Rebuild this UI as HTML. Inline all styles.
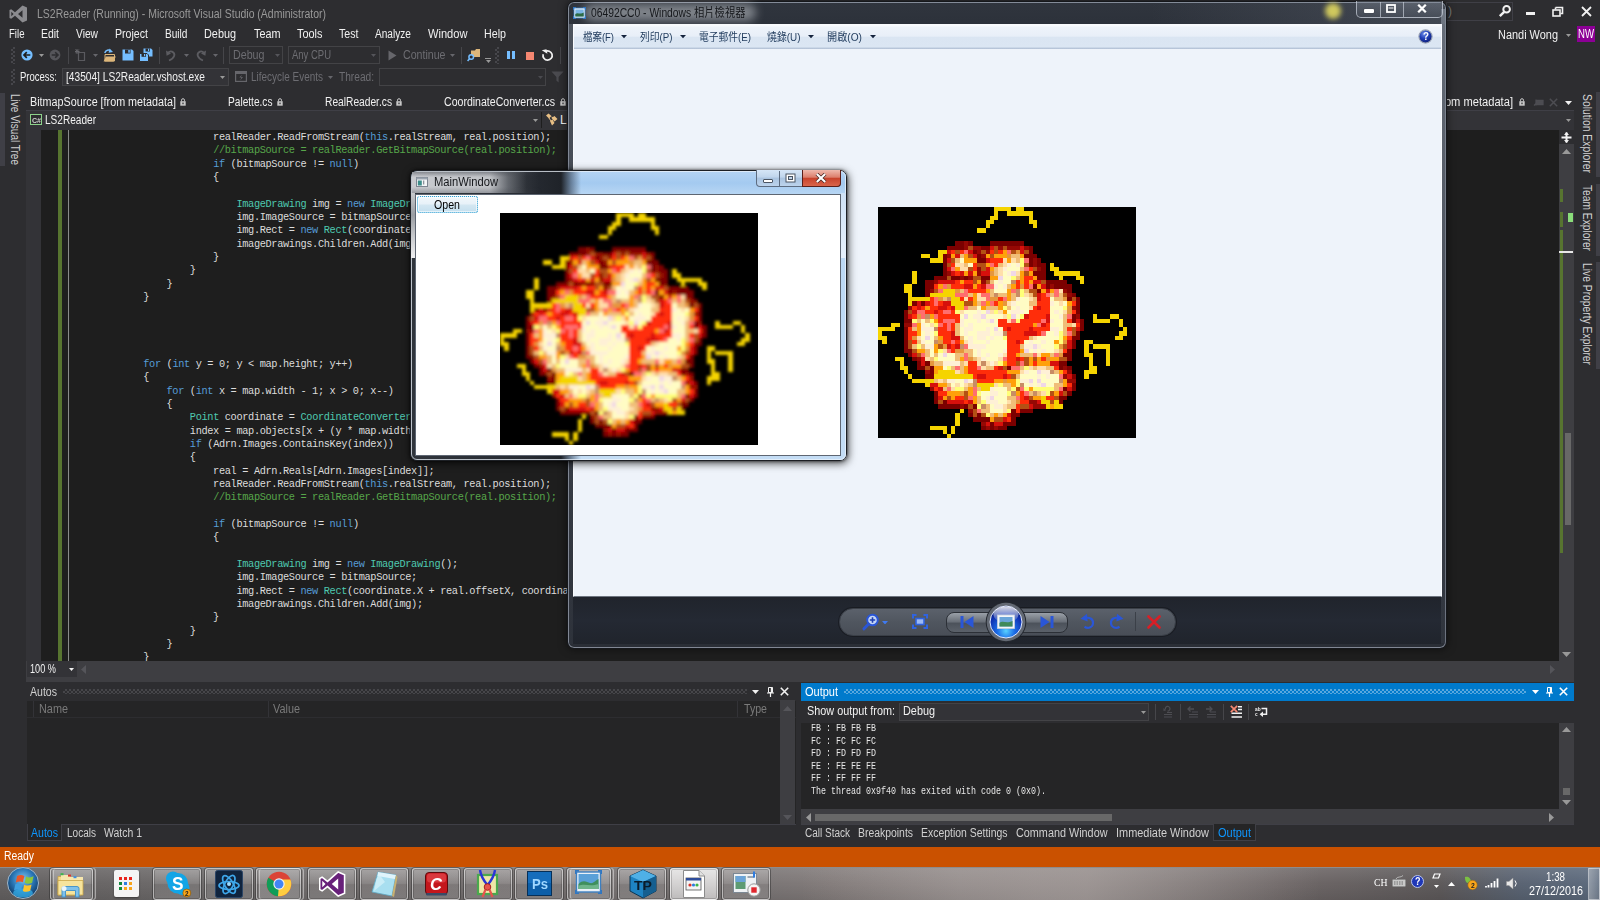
<!DOCTYPE html><html><head><meta charset="utf-8"><title>LS2Reader</title><style>
html,body{margin:0;padding:0;}
body{width:1600px;height:900px;overflow:hidden;position:relative;background:#2d2d30;font-family:"Liberation Sans","Noto Sans CJK TC",sans-serif;}
div,span,svg{position:absolute;box-sizing:border-box;}
.t{white-space:pre;transform-origin:0 50%;}
.code{font-family:"Liberation Mono",monospace;font-size:10.3px;line-height:13.35px;color:#dcdcdc;white-space:pre;left:0;}
.k{color:#569cd6;position:static}.c{color:#57a64a;position:static}.y{color:#4ec9b0;position:static}
</style></head><body><svg style="left:9px;top:5px" width="19" height="18" viewBox="0 0 19 18"><path d="M13.5 0.5 L18 2.5 V15.5 L13.5 17.5 L6 10.8 L2.2 13.8 L0.5 12.9 V5.1 L2.2 4.2 L6 7.2 Z M13.5 5.2 L9 9 L13.5 12.8 Z M2.3 6.8 V11.2 L4.6 9 Z" fill="#8b8b8f" fill-rule="evenodd"/></svg><span class="t" style="left:37px;top:5.8px;line-height:17px;font-size:12px;color:#999999;transform:scaleX(0.8725);">LS2Reader (Running) - Microsoft Visual Studio (Administrator)</span><div style="left:1446px;top:2px;width:67px;height:19px;border:1px solid #3f3f46;"></div><span class="t" style="left:1448px;top:3.3px;line-height:17px;font-size:12px;color:#777;">)</span><svg style="left:1498px;top:4px" width="14" height="14" viewBox="0 0 14 14"><circle cx="8.6" cy="5.2" r="3.3" fill="none" stroke="#f1f1f1" stroke-width="2"/><path d="M6.2 7.8 L1.8 12.2" stroke="#f1f1f1" stroke-width="2.4"/></svg><div style="left:1526px;top:12px;width:9px;height:3px;background:#f1f1f1;"></div><svg style="left:1552px;top:6px" width="12" height="12" viewBox="0 0 12 12"><path d="M3.5 1.5H10.5V7.5H8.5 M3.5 1.5V3.5" fill="none" stroke="#f1f1f1" stroke-width="1.6"/><rect x="1" y="4" width="7" height="6" fill="none" stroke="#f1f1f1" stroke-width="1.6"/></svg><svg style="left:1581px;top:6px" width="11" height="11" viewBox="0 0 11 11"><path d="M1 1L10 10M10 1L1 10" stroke="#f1f1f1" stroke-width="1.8"/></svg><span class="t" style="left:1498px;top:26.8px;line-height:17px;font-size:12px;color:#f1f1f1;transform:scaleX(0.9115);">Nandi Wong</span><svg style="left:1565.5px;top:33.5px" width="5" height="3" viewBox="0 0 5 3"><path d="M0 0H5L2.5 3Z" fill="#999"/></svg><div style="left:1577px;top:26px;width:18px;height:16px;background:#8c0095;"></div><span class="t" style="left:1578px;top:26.3px;line-height:17px;font-size:12px;color:#ffffff;transform:scaleX(0.8000);">NW</span><span class="t" style="left:8.5px;top:25.8px;line-height:17px;font-size:12px;color:#f1f1f1;transform:scaleX(0.8013);">File</span><span class="t" style="left:41px;top:25.8px;line-height:17px;font-size:12px;color:#f1f1f1;transform:scaleX(0.8701);">Edit</span><span class="t" style="left:76px;top:25.8px;line-height:17px;font-size:12px;color:#f1f1f1;transform:scaleX(0.8528);">View</span><span class="t" style="left:115px;top:25.8px;line-height:17px;font-size:12px;color:#f1f1f1;transform:scaleX(0.8833);">Project</span><span class="t" style="left:164.5px;top:25.8px;line-height:17px;font-size:12px;color:#f1f1f1;transform:scaleX(0.8431);">Build</span><span class="t" style="left:204px;top:25.8px;line-height:17px;font-size:12px;color:#f1f1f1;transform:scaleX(0.9046);">Debug</span><span class="t" style="left:253.5px;top:25.8px;line-height:17px;font-size:12px;color:#f1f1f1;transform:scaleX(0.9031);">Team</span><span class="t" style="left:297px;top:25.8px;line-height:17px;font-size:12px;color:#f1f1f1;transform:scaleX(0.9102);">Tools</span><span class="t" style="left:339px;top:25.8px;line-height:17px;font-size:12px;color:#f1f1f1;transform:scaleX(0.8857);">Test</span><span class="t" style="left:375px;top:25.8px;line-height:17px;font-size:12px;color:#f1f1f1;transform:scaleX(0.8430);">Analyze</span><span class="t" style="left:428px;top:25.8px;line-height:17px;font-size:12px;color:#f1f1f1;transform:scaleX(0.9253);">Window</span><span class="t" style="left:484px;top:25.8px;line-height:17px;font-size:12px;color:#f1f1f1;transform:scaleX(0.8911);">Help</span><div style="left:11px;top:47px;width:4px;height:17px;background-image:linear-gradient(45deg,#46464b 25%,transparent 25%,transparent 75%,#46464b 75%),linear-gradient(45deg,#46464b 25%,transparent 25%,transparent 75%,#46464b 75%);background-size:4px 4px;background-position:0 0,2px 2px"></div><svg style="left:21px;top:49px" width="12" height="12" viewBox="0 0 12 12"><circle cx="6" cy="6" r="5.6" fill="#75beff"/><path d="M9.3 6H3.2M5.8 3.2L3 6L5.8 8.8" stroke="#1e1e1e" stroke-width="1.7" fill="none"/></svg><svg style="left:38.5px;top:54.0px" width="5" height="3" viewBox="0 0 5 3"><path d="M0 0H5L2.5 3Z" fill="#999"/></svg><svg style="left:49px;top:49px" width="12" height="12" viewBox="0 0 12 12"><circle cx="6" cy="6" r="5.4" fill="#55555a"/><path d="M2.7 6H8.8M6.2 3.2L9 6L6.2 8.8" stroke="#2d2d30" stroke-width="1.6" fill="none"/></svg><div style="left:68px;top:47px;width:1px;height:17px;background:#46464a;"></div><svg style="left:75px;top:48px" width="12" height="14" viewBox="0 0 12 14"><path d="M3.5 4.5H9.5V12.5H3.5Z" fill="none" stroke="#5a5a5f" stroke-width="1.2"/><path d="M2 1V6M0 3.5H4.5M0.5 1.5L3.8 5.2M3.8 1.5L0.5 5.2" stroke="#66666b" stroke-width="1"/></svg><svg style="left:92.5px;top:54.0px" width="5" height="3" viewBox="0 0 5 3"><path d="M0 0H5L2.5 3Z" fill="#66666b"/></svg><svg style="left:103px;top:47.5px" width="13" height="14" viewBox="0 0 13 14"><path d="M2 6.5H11.5V13H2Z" fill="#2d2d30" stroke="#dcb67a" stroke-width="1"/><path d="M0.6 13.4L3 8.6H12.8L10.6 13.4Z" fill="#dcb67a"/><path d="M1.8 5C2.4 2.2 6 1.2 7.8 3" stroke="#75beff" stroke-width="1.5" fill="none"/><path d="M6.6 0.6L10 4L5.6 4.8Z" fill="#75beff"/></svg><svg style="left:122px;top:49px" width="12" height="12" viewBox="0 0 12 12"><path d="M0.5 0.5H10L11.5 2V11.5H0.5Z" fill="#75beff"/><rect x="3" y="0.5" width="5.5" height="4" fill="#2d2d30"/><rect x="6.3" y="1" width="1.5" height="2.7" fill="#75beff"/></svg><svg style="left:139px;top:48px" width="14" height="14" viewBox="0 0 14 14"><path d="M4.5 0.5H12L13.5 2V8.5H4.5Z" fill="#75beff"/><rect x="6.5" y="0.5" width="4.5" height="3" fill="#2d2d30"/><rect x="9" y="0.8" width="1.2" height="2.2" fill="#75beff"/><path d="M0.5 5.5H8L9.5 7V13.5H0.5Z" fill="#75beff" stroke="#2d2d30" stroke-width="1"/><rect x="2.5" y="5.8" width="4.5" height="3" fill="#2d2d30"/><rect x="5" y="6" width="1.2" height="2.2" fill="#75beff"/></svg><div style="left:159px;top:47px;width:1px;height:17px;background:#46464a;"></div><svg style="left:166px;top:49px" width="11" height="13" viewBox="0 0 11 13"><path d="M3 11.5C9 9 10 4.5 6 2.6C4 1.8 2.5 3 1.6 5" stroke="#5c5c61" stroke-width="1.8" fill="none"/><path d="M0 1.4L0.6 6.8L5 4.4Z" fill="#5c5c61"/></svg><svg style="left:183.5px;top:54.0px" width="5" height="3" viewBox="0 0 5 3"><path d="M0 0H5L2.5 3Z" fill="#66666b"/></svg><svg style="left:195px;top:49px" width="11" height="13" viewBox="0 0 11 13"><path d="M8 11.5C2 9 1 4.5 5 2.6C7 1.8 8.5 3 9.4 5" stroke="#5c5c61" stroke-width="1.8" fill="none"/><path d="M11 1.4L10.4 6.8L6 4.4Z" fill="#5c5c61"/></svg><svg style="left:212.5px;top:54.0px" width="5" height="3" viewBox="0 0 5 3"><path d="M0 0H5L2.5 3Z" fill="#66666b"/></svg><div style="left:223px;top:47px;width:1px;height:17px;background:#46464a;"></div><div style="left:229px;top:46px;width:54px;height:18px;background:#2d2d30;border:1px solid #434346;"></div><span class="t" style="left:233px;top:47.3px;line-height:17px;font-size:12px;color:#6d6d72;transform:scaleX(0.8905);">Debug</span><svg style="left:274.5px;top:54.0px" width="5" height="3" viewBox="0 0 5 3"><path d="M0 0H5L2.5 3Z" fill="#55555a"/></svg><div style="left:288px;top:46px;width:92px;height:18px;background:#2d2d30;border:1px solid #434346;"></div><span class="t" style="left:292px;top:47.3px;line-height:17px;font-size:12px;color:#6d6d72;transform:scaleX(0.7901);">Any CPU</span><svg style="left:371.0px;top:54.0px" width="5" height="3" viewBox="0 0 5 3"><path d="M0 0H5L2.5 3Z" fill="#55555a"/></svg><svg style="left:388px;top:50px" width="9" height="11" viewBox="0 0 9 11"><path d="M0.5 0.5L8.5 5.5L0.5 10.5Z" fill="#66666b"/></svg><span class="t" style="left:403px;top:47.3px;line-height:17px;font-size:12px;color:#6d6d72;transform:scaleX(0.8846);">Continue</span><svg style="left:450.0px;top:54.0px" width="5" height="3" viewBox="0 0 5 3"><path d="M0 0H5L2.5 3Z" fill="#66666b"/></svg><div style="left:461px;top:47px;width:1px;height:17px;background:#46464a;"></div><svg style="left:467px;top:48px" width="14" height="14" viewBox="0 0 14 14"><path d="M4 2.5H8L9 1H13V9H4Z" fill="#dcb67a"/><circle cx="4.2" cy="9" r="2.3" fill="#2d2d30" stroke="#75beff" stroke-width="1.5"/><path d="M2.6 10.8L0.6 13" stroke="#75beff" stroke-width="1.6"/></svg><div style="left:485px;top:58px;width:6px;height:1px;background:#999;"></div><svg style="left:485.5px;top:60.0px" width="5" height="3" viewBox="0 0 5 3"><path d="M0 0H5L2.5 3Z" fill="#999"/></svg><div style="left:495px;top:47px;width:4px;height:17px;background-image:linear-gradient(45deg,#46464b 25%,transparent 25%,transparent 75%,#46464b 75%),linear-gradient(45deg,#46464b 25%,transparent 25%,transparent 75%,#46464b 75%);background-size:4px 4px;background-position:0 0,2px 2px"></div><div style="left:507px;top:50.5px;width:3px;height:8.5px;background:#75beff;"></div><div style="left:511.7px;top:50.5px;width:3px;height:8.5px;background:#75beff;"></div><div style="left:525.5px;top:51.5px;width:8px;height:8px;background:#f48771;"></div><svg style="left:541px;top:49px" width="13" height="13" viewBox="0 0 13 13"><path d="M4.2 2.6A4.6 4.6 0 1 1 2.2 5.2" stroke="#f1f1f1" stroke-width="1.7" fill="none"/><path d="M1.2 0.6H6V5.2Z" fill="#f1f1f1" transform="rotate(-12 4 3)"/></svg><div style="left:560px;top:47px;width:1px;height:17px;background:#46464a;"></div><div style="left:11px;top:69px;width:4px;height:16px;background-image:linear-gradient(45deg,#46464b 25%,transparent 25%,transparent 75%,#46464b 75%),linear-gradient(45deg,#46464b 25%,transparent 25%,transparent 75%,#46464b 75%);background-size:4px 4px;background-position:0 0,2px 2px"></div><span class="t" style="left:19.5px;top:68.8px;line-height:17px;font-size:12px;color:#f1f1f1;transform:scaleX(0.7925);">Process:</span><div style="left:62px;top:68px;width:167px;height:18px;background:#333337;border:1px solid #434346;"></div><span class="t" style="left:65.5px;top:68.8px;line-height:17px;font-size:12px;color:#f1f1f1;transform:scaleX(0.8469);">[43504] LS2Reader.vshost.exe</span><svg style="left:219.5px;top:75.5px" width="5" height="3" viewBox="0 0 5 3"><path d="M0 0H5L2.5 3Z" fill="#999"/></svg><svg style="left:235px;top:71px" width="12" height="11" viewBox="0 0 12 11"><rect x="0.6" y="0.6" width="10.8" height="9.8" fill="none" stroke="#66666b" stroke-width="1.2"/><rect x="0.6" y="0.6" width="10.8" height="2.4" fill="#66666b"/><path d="M6.8 3.8L4.4 6.6H6.4L5.2 9.4L8 6H6Z" fill="#66666b"/></svg><span class="t" style="left:251px;top:68.8px;line-height:17px;font-size:12px;color:#6d6d72;transform:scaleX(0.8303);">Lifecycle Events</span><svg style="left:328.0px;top:75.5px" width="5" height="3" viewBox="0 0 5 3"><path d="M0 0H5L2.5 3Z" fill="#66666b"/></svg><span class="t" style="left:339px;top:68.8px;line-height:17px;font-size:12px;color:#6d6d72;transform:scaleX(0.8462);">Thread:</span><div style="left:379px;top:68px;width:167px;height:18px;background:#2d2d30;border:1px solid #434346;"></div><svg style="left:537.5px;top:75.5px" width="5" height="3" viewBox="0 0 5 3"><path d="M0 0H5L2.5 3Z" fill="#4a4a4f"/></svg><svg style="left:551px;top:71px" width="13" height="12" viewBox="0 0 13 12"><path d="M0.5 0.5H12.5L7.6 6V11.5L5.4 9.6V6Z" fill="#4a4a4f"/></svg><div style="left:0px;top:93px;width:5px;height:73px;background:#3f3f46;"></div><span class="t" style="left:23.0px;top:94px;line-height:17px;font-size:12px;color:#d0d0d0;transform-origin:0 0;transform:rotate(90deg) scaleX(0.8336);">Live Visual Tree</span><div style="left:1596px;top:92px;width:4px;height:85px;background:#3f3f46;"></div><span class="t" style="left:1595.0px;top:94px;line-height:17px;font-size:12px;color:#d0d0d0;transform-origin:0 0;transform:rotate(90deg) scaleX(0.8644);">Solution Explorer</span><div style="left:1596px;top:184px;width:4px;height:72px;background:#3f3f46;"></div><span class="t" style="left:1595.0px;top:185px;line-height:17px;font-size:12px;color:#d0d0d0;transform-origin:0 0;transform:rotate(90deg) scaleX(0.8530);">Team Explorer</span><div style="left:1596px;top:262px;width:4px;height:107px;background:#3f3f46;"></div><span class="t" style="left:1595.0px;top:263px;line-height:17px;font-size:12px;color:#d0d0d0;transform-origin:0 0;transform:rotate(90deg) scaleX(0.8592);">Live Property Explorer</span><span class="t" style="left:29.5px;top:94.3px;line-height:17px;font-size:12px;color:#f1f1f1;transform:scaleX(0.8971);">BitmapSource [from metadata]</span><svg style="left:180px;top:98px" width="6" height="8" viewBox="0 0 6 8"><rect x="0.3" y="3.2" width="5.4" height="4.5" fill="#c8c8c8"/><path d="M1.5 3.4V2.2A1.5 1.5 0 0 1 4.5 2.2V3.4" stroke="#c8c8c8" stroke-width="1" fill="none"/><rect x="2.4" y="4.6" width="1.2" height="1.6" fill="#2d2d30"/></svg><span class="t" style="left:227.5px;top:94.3px;line-height:17px;font-size:12px;color:#f1f1f1;transform:scaleX(0.8444);">Palette.cs</span><svg style="left:277px;top:98px" width="6" height="8" viewBox="0 0 6 8"><rect x="0.3" y="3.2" width="5.4" height="4.5" fill="#c8c8c8"/><path d="M1.5 3.4V2.2A1.5 1.5 0 0 1 4.5 2.2V3.4" stroke="#c8c8c8" stroke-width="1" fill="none"/><rect x="2.4" y="4.6" width="1.2" height="1.6" fill="#2d2d30"/></svg><span class="t" style="left:324.5px;top:94.3px;line-height:17px;font-size:12px;color:#f1f1f1;transform:scaleX(0.8511);">RealReader.cs</span><svg style="left:396px;top:98px" width="6" height="8" viewBox="0 0 6 8"><rect x="0.3" y="3.2" width="5.4" height="4.5" fill="#c8c8c8"/><path d="M1.5 3.4V2.2A1.5 1.5 0 0 1 4.5 2.2V3.4" stroke="#c8c8c8" stroke-width="1" fill="none"/><rect x="2.4" y="4.6" width="1.2" height="1.6" fill="#2d2d30"/></svg><span class="t" style="left:443.5px;top:94.3px;line-height:17px;font-size:12px;color:#f1f1f1;transform:scaleX(0.8804);">CoordinateConverter.cs</span><svg style="left:559.5px;top:98px" width="6" height="8" viewBox="0 0 6 8"><rect x="0.3" y="3.2" width="5.4" height="4.5" fill="#c8c8c8"/><path d="M1.5 3.4V2.2A1.5 1.5 0 0 1 4.5 2.2V3.4" stroke="#c8c8c8" stroke-width="1" fill="none"/><rect x="2.4" y="4.6" width="1.2" height="1.6" fill="#2d2d30"/></svg><span class="t" style="left:1435px;top:94.3px;line-height:17px;font-size:12px;color:#f1f1f1;transform:scaleX(0.9281);">[from metadata]</span><svg style="left:1519px;top:98px" width="6" height="8" viewBox="0 0 6 8"><rect x="0.3" y="3.2" width="5.4" height="4.5" fill="#c8c8c8"/><path d="M1.5 3.4V2.2A1.5 1.5 0 0 1 4.5 2.2V3.4" stroke="#c8c8c8" stroke-width="1" fill="none"/><rect x="2.4" y="4.6" width="1.2" height="1.6" fill="#2d2d30"/></svg><svg style="left:1533px;top:97px" width="11" height="10" viewBox="0 0 11 10"><path d="M1 8.5L4 5.5M3 2.5V8.5M3.5 3.5H10V7.5H3.5Z" stroke="#4d4d52" stroke-width="1.3" fill="#4d4d52"/></svg><svg style="left:1549px;top:98px" width="9" height="9" viewBox="0 0 9 9"><path d="M0.8 0.8L8.2 8.2M8.2 0.8L0.8 8.2" stroke="#4d4d52" stroke-width="1.5"/></svg><svg style="left:1565.0px;top:101.0px" width="7" height="4" viewBox="0 0 7 4"><path d="M0 0H7L3.5 4Z" fill="#f1f1f1"/></svg><div style="left:26px;top:110px;width:1548px;height:20px;background:#333337;border-top:1px solid #3f3f46;"></div><div style="left:540.5px;top:112px;width:1px;height:16px;background:#1e1e1e;"></div><svg style="left:30px;top:114px" width="12" height="11" viewBox="0 0 12 11"><rect x="0.5" y="0.5" width="11" height="10" fill="#2d2d30" stroke="#8dd28a" stroke-width="1"/></svg><span class="t" style="left:31.5px;top:114.6px;line-height:11px;font-size:8px;color:#d0d0d0;transform:scaleX(0.8794);font-weight:bold;">C#</span><span class="t" style="left:44.5px;top:111.8px;line-height:17px;font-size:12px;color:#f1f1f1;transform:scaleX(0.8399);">LS2Reader</span><svg style="left:532.5px;top:119.0px" width="5" height="3" viewBox="0 0 5 3"><path d="M0 0H5L2.5 3Z" fill="#999"/></svg><svg style="left:545px;top:113px" width="13" height="13" viewBox="0 0 13 13"><path d="M1 2.5L3.5 0.5L6.5 3L4 5.5ZM6.5 5L9.5 3L12.5 6L9.5 8.5ZM5 8L7.5 6.5L9.5 10L7 12.5Z" fill="#e8bf84"/><path d="M4 5L6 8M6.5 4L9 5" stroke="#e8bf84" stroke-width="1"/></svg><span class="t" style="left:560px;top:111.8px;line-height:17px;font-size:12px;color:#f1f1f1;">LS2Reader.MapReader</span><svg style="left:1565.5px;top:119.0px" width="5" height="3" viewBox="0 0 5 3"><path d="M0 0H5L2.5 3Z" fill="#999"/></svg><div style="left:26px;top:130px;width:1533px;height:531px;background:#1e1e1e;"></div><div style="left:26px;top:130px;width:15px;height:531px;background:#333337;"></div><div style="left:58px;top:130px;width:4px;height:531px;background:#577430;"></div><div style="left:68px;top:130px;width:1px;height:531px;background:#8a8a8a;"></div><div style="left:26px;top:129.3px;width:1533px;height:531.7px;overflow:hidden"><div class="code" style="left:47.4px;top:1.7px;letter-spacing:-0.357px">                        realReader.ReadFromStream(<span class="k">this</span>.realStream, real.position);
                        <span class="c">//bitmapSource = realReader.GetBitmapSource(real.position);</span>
                        <span class="k">if</span> (bitmapSource != <span class="k">null</span>)
                        {

                            <span class="y">ImageDrawing</span> img = <span class="k">new</span> <span class="y">ImageDrawing</span>();
                            img.ImageSource = bitmapSource;
                            img.Rect = <span class="k">new</span> <span class="y">Rect</span>(coordinate.X + real.offsetX, coordinate.Y + real.offsetY, real.width, real.height);
                            imageDrawings.Children.Add(img);
                        }
                    }
                }
            }




            <span class="k">for</span> (<span class="k">int</span> y = 0; y &lt; map.height; y++)
            {
                <span class="k">for</span> (<span class="k">int</span> x = map.width - 1; x &gt; 0; x--)
                {
                    <span class="y">Point</span> coordinate = <span class="y">CoordinateConverter</span>.Convert(x, y, map.width, map.height);
                    index = map.objects[x + (y * map.width)];
                    <span class="k">if</span> (Adrn.Images.ContainsKey(index))
                    {
                        real = Adrn.Reals[Adrn.Images[index]];
                        realReader.ReadFromStream(<span class="k">this</span>.realStream, real.position);
                        <span class="c">//bitmapSource = realReader.GetBitmapSource(real.position);</span>

                        <span class="k">if</span> (bitmapSource != <span class="k">null</span>)
                        {

                            <span class="y">ImageDrawing</span> img = <span class="k">new</span> <span class="y">ImageDrawing</span>();
                            img.ImageSource = bitmapSource;
                            img.Rect = <span class="k">new</span> <span class="y">Rect</span>(coordinate.X + real.offsetX, coordinate.Y + real.offsetY, real.width, real.height);
                            imageDrawings.Children.Add(img);
                        }
                    }
                }
            }</div></div><div style="left:1559px;top:130px;width:15px;height:531px;background:#3e3e42;"></div><div style="left:1559px;top:130px;width:15px;height:14px;background:#2d2d30;"></div><svg style="left:1561px;top:132px" width="11" height="11" viewBox="0 0 11 11"><path d="M0.5 5.5H10.5M5.5 0.5V10.5" stroke="#f1f1f1" stroke-width="2"/><path d="M5.5 0L8 3H3ZM5.5 11L8 8H3Z" fill="#f1f1f1"/></svg><svg style="left:1562px;top:149px" width="9" height="5" viewBox="0 0 9 5"><path d="M0 5L4.5 0L9 5Z" fill="#999"/></svg><div style="left:1560px;top:189px;width:3px;height:13px;background:#577430;"></div><div style="left:1560px;top:212px;width:3px;height:15px;background:#577430;"></div><div style="left:1560px;top:230px;width:3px;height:323px;background:#577430;"></div><div style="left:1568px;top:213px;width:5px;height:9px;background:#8ade7a;"></div><div style="left:1559px;top:251px;width:14px;height:1.5px;background:#e8e8e8;"></div><div style="left:1564.5px;top:433px;width:6px;height:92px;background:#686868;"></div><svg style="left:1562px;top:652px" width="9" height="5" viewBox="0 0 9 5"><path d="M0 0L4.5 5L9 0Z" fill="#999"/></svg><div style="left:26px;top:661px;width:1548px;height:21px;background:#3e3e42;"></div><div style="left:27px;top:661px;width:50px;height:16px;background:#333337;"></div><span class="t" style="left:29.5px;top:661.3px;line-height:17px;font-size:12px;color:#f1f1f1;transform:scaleX(0.7640);">100 %</span><svg style="left:69.0px;top:668.0px" width="5" height="3" viewBox="0 0 5 3"><path d="M0 0H5L2.5 3Z" fill="#f1f1f1"/></svg><svg style="left:81px;top:665px" width="5" height="9" viewBox="0 0 5 9"><path d="M5 0L0 4.5L5 9Z" fill="#55555a"/></svg><svg style="left:1550px;top:665px" width="5" height="9" viewBox="0 0 5 9"><path d="M0 0L5 4.5L0 9Z" fill="#55555a"/></svg><div style="left:27px;top:683px;width:769px;height:142px;background:#252526;"></div><div style="left:27px;top:683px;width:769px;height:17px;background:#2d2d30;"></div><span class="t" style="left:30px;top:683.8px;line-height:17px;font-size:12px;color:#d0d0d0;transform:scaleX(0.8798);">Autos</span><div style="left:63px;top:689px;width:684px;height:5px;background-image:linear-gradient(45deg,#46464a 25%,transparent 25%,transparent 75%,#46464a 75%),linear-gradient(45deg,#46464a 25%,transparent 25%,transparent 75%,#46464a 75%);background-size:4px 4px;background-position:0 0,2px 2px"></div><svg style="left:752.0px;top:690.0px" width="7" height="4" viewBox="0 0 7 4"><path d="M0 0H7L3.5 4Z" fill="#f1f1f1"/></svg><svg style="left:767px;top:687px" width="7" height="10" viewBox="0 0 7 10"><path d="M1.5 0.5H5.5V5.5H1.5Z M4.3 0.5V5.5" fill="none" stroke="#f1f1f1" stroke-width="1"/><path d="M0 6H7M3.5 6V10" stroke="#f1f1f1" stroke-width="1.2"/><rect x="4" y="0.5" width="1.5" height="5" fill="#f1f1f1"/></svg><svg style="left:780px;top:687px" width="9" height="9" viewBox="0 0 9 9"><path d="M0.8 0.8L8.2 8.2M8.2 0.8L0.8 8.2" stroke="#f1f1f1" stroke-width="1.6"/></svg><div style="left:27px;top:700px;width:769px;height:18px;background:#252526;border-top:1px solid #2d2d30;border-bottom:1px solid #2d2d30;"></div><div style="left:33px;top:701px;width:1px;height:16px;background:#333337;"></div><div style="left:268px;top:701px;width:1px;height:16px;background:#333337;"></div><div style="left:737px;top:701px;width:1px;height:16px;background:#333337;"></div><span class="t" style="left:38.5px;top:701.3px;line-height:17px;font-size:12px;color:#7a7a7a;transform:scaleX(0.9058);">Name</span><span class="t" style="left:273px;top:701.3px;line-height:17px;font-size:12px;color:#7a7a7a;transform:scaleX(0.9057);">Value</span><span class="t" style="left:743.5px;top:701.3px;line-height:17px;font-size:12px;color:#7a7a7a;transform:scaleX(0.8841);">Type</span><div style="left:780px;top:700px;width:15px;height:124px;background:#3e3e42;"></div><svg style="left:783px;top:706px" width="9" height="5" viewBox="0 0 9 5"><path d="M0 5L4.5 0L9 5Z" fill="#55555a"/></svg><svg style="left:783px;top:815px" width="9" height="5" viewBox="0 0 9 5"><path d="M0 0L4.5 5L9 0Z" fill="#55555a"/></svg><div style="left:27px;top:824px;width:769px;height:1px;background:#3f3f46;"></div><div style="left:27px;top:824px;width:35px;height:17px;background:#252526;border:1px solid #3f3f46;border-top:none;"></div><span class="t" style="left:30.5px;top:824.8px;line-height:17px;font-size:12px;color:#0e97ff;transform:scaleX(0.8798);">Autos</span><span class="t" style="left:66.5px;top:824.8px;line-height:17px;font-size:12px;color:#d0d0d0;transform:scaleX(0.8360);">Locals</span><span class="t" style="left:104px;top:824.8px;line-height:17px;font-size:12px;color:#d0d0d0;transform:scaleX(0.8720);">Watch 1</span><div style="left:801px;top:683px;width:773px;height:142px;background:#252526;"></div><div style="left:801px;top:683px;width:773px;height:18px;background:#007acc;"></div><span class="t" style="left:804.5px;top:683.8px;line-height:17px;font-size:12px;color:#ffffff;transform:scaleX(0.9159);">Output</span><div style="left:844px;top:689px;width:682px;height:5px;background-image:linear-gradient(45deg,#59a8de 25%,transparent 25%,transparent 75%,#59a8de 75%),linear-gradient(45deg,#59a8de 25%,transparent 25%,transparent 75%,#59a8de 75%);background-size:4px 4px;background-position:0 0,2px 2px"></div><svg style="left:1531.5px;top:690.0px" width="7" height="4" viewBox="0 0 7 4"><path d="M0 0H7L3.5 4Z" fill="#ffffff"/></svg><svg style="left:1546px;top:687px" width="7" height="10" viewBox="0 0 7 10"><path d="M1.5 0.5H5.5V5.5H1.5Z M4.3 0.5V5.5" fill="none" stroke="#ffffff" stroke-width="1"/><path d="M0 6H7M3.5 6V10" stroke="#ffffff" stroke-width="1.2"/><rect x="4" y="0.5" width="1.5" height="5" fill="#ffffff"/></svg><svg style="left:1559px;top:687px" width="9" height="9" viewBox="0 0 9 9"><path d="M0.8 0.8L8.2 8.2M8.2 0.8L0.8 8.2" stroke="#ffffff" stroke-width="1.6"/></svg><div style="left:801px;top:701px;width:773px;height:22px;background:#2d2d30;"></div><span class="t" style="left:806.5px;top:703.3px;line-height:17px;font-size:12px;color:#f1f1f1;transform:scaleX(0.9036);">Show output from:</span><div style="left:899px;top:703px;width:250px;height:18px;background:#333337;border:1px solid #434346;"></div><span class="t" style="left:903px;top:703.3px;line-height:17px;font-size:12px;color:#f1f1f1;transform:scaleX(0.9046);">Debug</span><svg style="left:1140.5px;top:710.5px" width="5" height="3" viewBox="0 0 5 3"><path d="M0 0H5L2.5 3Z" fill="#999"/></svg><div style="left:1155px;top:704px;width:1px;height:16px;background:#46464a;"></div><svg style="left:1161px;top:705px" width="13" height="13" viewBox="0 0 13 13"><path d="M4.5 4.5A2.3 2.3 0 1 1 6.5 6" stroke="#4d4d52" stroke-width="1.2" fill="none"/><path d="M2.5 3L5 5.5L2.5 6Z" fill="#4d4d52"/><path d="M6 7.5H11M3 9.5H11M3 12H11" stroke="#4d4d52" stroke-width="1.2"/></svg><svg style="left:1186px;top:705px" width="13" height="13" viewBox="0 0 13 13"><path d="M2 4H8M4.5 1.5L2 4L4.5 6.5" stroke="#4d4d52" stroke-width="1.3" fill="none"/><path d="M6 7H12M3 9.5H12M3 12H12" stroke="#4d4d52" stroke-width="1.2"/></svg><svg style="left:1204px;top:705px" width="13" height="13" viewBox="0 0 13 13"><path d="M2 4H8M5.5 1.5L8 4L5.5 6.5" stroke="#4d4d52" stroke-width="1.3" fill="none"/><path d="M6 7H12M3 9.5H12M3 12H12" stroke="#4d4d52" stroke-width="1.2"/></svg><div style="left:1180px;top:704px;width:1px;height:16px;background:#46464a;"></div><div style="left:1223px;top:704px;width:1px;height:16px;background:#46464a;"></div><svg style="left:1230px;top:705px" width="13" height="14" viewBox="0 0 13 14"><path d="M8 1.8H12M8 4.6H12M1.5 8.3H12M1.5 12H12" stroke="#f1f1f1" stroke-width="1.5"/><path d="M0.8 0.8L7.2 7.2M7.2 0.8L0.8 7.2" stroke="#f48771" stroke-width="1.7"/></svg><div style="left:1248px;top:704px;width:1px;height:16px;background:#46464a;"></div><svg style="left:1254px;top:705px" width="14" height="13" viewBox="0 0 14 13"><path d="M7.5 3.6H12.5V9.3H8" stroke="#f1f1f1" stroke-width="1.5" fill="none"/><path d="M9 6.6L5.6 9.3L9 12Z" fill="#f1f1f1"/></svg><span class="t" style="left:1255px;top:704.7px;line-height:8px;font-size:5.5px;color:#f1f1f1;transform:scaleX(0.8720);font-weight:bold;">ab</span><span class="t" style="left:1255px;top:710.2px;line-height:8px;font-size:5.5px;color:#f1f1f1;transform:scaleX(0.8490);font-weight:bold;">c</span><div style="left:801px;top:723px;width:758px;height:86px;background:#252526;"></div><span class="t" style="left:810.5px;top:721.2px;line-height:15px;font-size:10.5px;color:#e6e6e6;transform:scaleX(0.7934);font-family:'Liberation Mono',monospace;">FB : FB FB FB</span><span class="t" style="left:810.5px;top:733.7px;line-height:15px;font-size:10.5px;color:#e6e6e6;transform:scaleX(0.7934);font-family:'Liberation Mono',monospace;">FC : FC FC FC</span><span class="t" style="left:810.5px;top:746.2px;line-height:15px;font-size:10.5px;color:#e6e6e6;transform:scaleX(0.7934);font-family:'Liberation Mono',monospace;">FD : FD FD FD</span><span class="t" style="left:810.5px;top:758.7px;line-height:15px;font-size:10.5px;color:#e6e6e6;transform:scaleX(0.7934);font-family:'Liberation Mono',monospace;">FE : FE FE FE</span><span class="t" style="left:810.5px;top:771.2px;line-height:15px;font-size:10.5px;color:#e6e6e6;transform:scaleX(0.7934);font-family:'Liberation Mono',monospace;">FF : FF FF FF</span><span class="t" style="left:810.5px;top:783.7px;line-height:15px;font-size:10.5px;color:#e6e6e6;transform:scaleX(0.7935);font-family:'Liberation Mono',monospace;">The thread 0x9f40 has exited with code 0 (0x0).</span><div style="left:1559px;top:723px;width:15px;height:86px;background:#3e3e42;"></div><svg style="left:1562px;top:727px" width="9" height="5" viewBox="0 0 9 5"><path d="M0 5L4.5 0L9 5Z" fill="#999"/></svg><div style="left:1562.5px;top:788px;width:7px;height:7px;background:#686868;"></div><svg style="left:1562px;top:800px" width="9" height="5" viewBox="0 0 9 5"><path d="M0 0L4.5 5L9 0Z" fill="#999"/></svg><div style="left:801px;top:809px;width:773px;height:16px;background:#3e3e42;"></div><svg style="left:806px;top:812.5px" width="5" height="9" viewBox="0 0 5 9"><path d="M5 0L0 4.5L5 9Z" fill="#999"/></svg><div style="left:815px;top:813.5px;width:297px;height:7px;background:#686868;"></div><svg style="left:1549px;top:812.5px" width="5" height="9" viewBox="0 0 5 9"><path d="M0 0L5 4.5L0 9Z" fill="#999"/></svg><div style="left:801px;top:824px;width:773px;height:1px;background:#3f3f46;"></div><div style="left:1212.5px;top:824px;width:43px;height:17px;background:#252526;border:1px solid #3f3f46;border-top:none;"></div><span class="t" style="left:804.5px;top:824.8px;line-height:17px;font-size:12px;color:#d0d0d0;transform:scaleX(0.8329);">Call Stack</span><span class="t" style="left:857.5px;top:824.8px;line-height:17px;font-size:12px;color:#d0d0d0;transform:scaleX(0.8679);">Breakpoints</span><span class="t" style="left:921px;top:824.8px;line-height:17px;font-size:12px;color:#d0d0d0;transform:scaleX(0.8702);">Exception Settings</span><span class="t" style="left:1016px;top:824.8px;line-height:17px;font-size:12px;color:#d0d0d0;transform:scaleX(0.9026);">Command Window</span><span class="t" style="left:1115.5px;top:824.8px;line-height:17px;font-size:12px;color:#d0d0d0;transform:scaleX(0.9113);">Immediate Window</span><span class="t" style="left:1217.5px;top:824.8px;line-height:17px;font-size:12px;color:#0e97ff;transform:scaleX(0.9159);">Output</span><div style="left:0px;top:847px;width:1600px;height:20px;background:#ca5100;"></div><span class="t" style="left:3.5px;top:848.3px;line-height:17px;font-size:12px;color:#ffffff;transform:scaleX(0.8649);">Ready</span><div style="left:0;top:867px;width:1600px;height:33px;background:linear-gradient(90deg,#646161 0%,#6e6b6b 12%,#757070 30%,#7b7676 48%,#827b7a 52%,#8d8685 60%,#857e7d 68%,#6f6868 80%,#5e5a5b 90%,#5a6473 95%,#5d6b7e 100%);border-top:1px solid #8f8b8b"></div><div style="left:0;top:868px;width:1600px;height:32px;background:linear-gradient(180deg,rgba(255,255,255,.10),rgba(255,255,255,0) 50%,rgba(0,0,0,.10))"></div><div style="left:800px;top:868px;width:520px;height:32px;background:linear-gradient(90deg,rgba(170,162,160,0) 0,rgba(176,168,166,.5) 45%,rgba(176,168,166,.55) 55%,rgba(150,140,138,0) 100%)"></div><svg style="left:5.5px;top:866px" width="34" height="34" viewBox="0 0 34 34"><defs><radialGradient id="orb" cx="50%" cy="38%" r="60%"><stop offset="0" stop-color="#7cc4ee"/><stop offset=".55" stop-color="#2b78b8"/><stop offset="1" stop-color="#0d3966"/></radialGradient></defs><circle cx="17" cy="17" r="15.5" fill="url(#orb)" stroke="#9fb6c9" stroke-width="1"/><ellipse cx="17" cy="27" rx="10" ry="4.5" fill="#36b5f0" opacity=".7"/><g transform="translate(18.2 17.2) scale(1.25) translate(-16.2 -17.2)"><path d="M10.5 11.5C12.5 10.3 14.5 10.4 16.3 11.4L15.2 16.4C13.4 15.5 11.5 15.5 9.5 16.6Z" fill="#e8572a"/><path d="M17.7 11.9C19.6 12.9 21.6 12.9 23.7 11.7L22.5 16.8C20.5 17.9 18.5 17.9 16.6 16.9Z" fill="#8cc63e"/><path d="M9.1 18.1C11.1 17 13 17 14.9 17.9L13.8 22.8C11.9 21.9 10 21.9 8 23Z" fill="#3e9fe0"/><path d="M16.2 18.4C18.1 19.4 20.1 19.4 22.1 18.3L21 23.3C19 24.4 17 24.4 15.1 23.4Z" fill="#fbc32d"/></g></svg><div style="left:52.5px;top:868px;width:43px;height:32px;border:1px solid rgba(255,255,255,.38);border-radius:3px;background:rgba(255,255,255,.10)"></div><div style="left:49.5px;top:868px;width:43px;height:32px;border:1px solid rgba(255,255,255,.45);border-radius:3px;background:linear-gradient(180deg,rgba(255,255,255,.30) 0%,rgba(255,255,255,.16) 48%,rgba(255,255,255,.07) 52%,rgba(255,255,255,.14) 100%);box-shadow:inset 0 0 0 1px rgba(0,0,0,.18), 0 0 0 1px rgba(40,40,40,.45)"></div><div style="left:153px;top:868px;width:48px;height:32px;border:1px solid rgba(255,255,255,.45);border-radius:3px;background:linear-gradient(180deg,rgba(255,255,255,.30) 0%,rgba(255,255,255,.16) 48%,rgba(255,255,255,.07) 52%,rgba(255,255,255,.14) 100%);box-shadow:inset 0 0 0 1px rgba(0,0,0,.18), 0 0 0 1px rgba(40,40,40,.45)"></div><div style="left:204.5px;top:868px;width:48px;height:32px;border:1px solid rgba(255,255,255,.45);border-radius:3px;background:linear-gradient(180deg,rgba(255,255,255,.30) 0%,rgba(255,255,255,.16) 48%,rgba(255,255,255,.07) 52%,rgba(255,255,255,.14) 100%);box-shadow:inset 0 0 0 1px rgba(0,0,0,.18), 0 0 0 1px rgba(40,40,40,.45)"></div><div style="left:259px;top:868px;width:45px;height:32px;border:1px solid rgba(255,255,255,.38);border-radius:3px;background:rgba(255,255,255,.10)"></div><div style="left:256px;top:868px;width:45px;height:32px;border:1px solid rgba(255,255,255,.45);border-radius:3px;background:linear-gradient(180deg,rgba(255,255,255,.30) 0%,rgba(255,255,255,.16) 48%,rgba(255,255,255,.07) 52%,rgba(255,255,255,.14) 100%);box-shadow:inset 0 0 0 1px rgba(0,0,0,.18), 0 0 0 1px rgba(40,40,40,.45)"></div><div style="left:308px;top:868px;width:48px;height:32px;border:1px solid rgba(255,255,255,.45);border-radius:3px;background:linear-gradient(180deg,rgba(255,255,255,.30) 0%,rgba(255,255,255,.16) 48%,rgba(255,255,255,.07) 52%,rgba(255,255,255,.14) 100%);box-shadow:inset 0 0 0 1px rgba(0,0,0,.18), 0 0 0 1px rgba(40,40,40,.45)"></div><div style="left:360px;top:868px;width:48px;height:32px;border:1px solid rgba(255,255,255,.45);border-radius:3px;background:linear-gradient(180deg,rgba(255,255,255,.30) 0%,rgba(255,255,255,.16) 48%,rgba(255,255,255,.07) 52%,rgba(255,255,255,.14) 100%);box-shadow:inset 0 0 0 1px rgba(0,0,0,.18), 0 0 0 1px rgba(40,40,40,.45)"></div><div style="left:412px;top:868px;width:48px;height:32px;border:1px solid rgba(255,255,255,.45);border-radius:3px;background:linear-gradient(180deg,rgba(255,255,255,.30) 0%,rgba(255,255,255,.16) 48%,rgba(255,255,255,.07) 52%,rgba(255,255,255,.14) 100%);box-shadow:inset 0 0 0 1px rgba(0,0,0,.18), 0 0 0 1px rgba(40,40,40,.45)"></div><div style="left:463.5px;top:868px;width:48px;height:32px;border:1px solid rgba(255,255,255,.45);border-radius:3px;background:linear-gradient(180deg,rgba(255,255,255,.30) 0%,rgba(255,255,255,.16) 48%,rgba(255,255,255,.07) 52%,rgba(255,255,255,.14) 100%);box-shadow:inset 0 0 0 1px rgba(0,0,0,.18), 0 0 0 1px rgba(40,40,40,.45)"></div><div style="left:515px;top:868px;width:48px;height:32px;border:1px solid rgba(255,255,255,.45);border-radius:3px;background:linear-gradient(180deg,rgba(255,255,255,.30) 0%,rgba(255,255,255,.16) 48%,rgba(255,255,255,.07) 52%,rgba(255,255,255,.14) 100%);box-shadow:inset 0 0 0 1px rgba(0,0,0,.18), 0 0 0 1px rgba(40,40,40,.45)"></div><div style="left:569.5px;top:868px;width:44px;height:32px;border:1px solid rgba(255,255,255,.38);border-radius:3px;background:rgba(255,255,255,.10)"></div><div style="left:566.5px;top:868px;width:44px;height:32px;border:1px solid rgba(255,255,255,.45);border-radius:3px;background:linear-gradient(180deg,rgba(255,255,255,.30) 0%,rgba(255,255,255,.16) 48%,rgba(255,255,255,.07) 52%,rgba(255,255,255,.14) 100%);box-shadow:inset 0 0 0 1px rgba(0,0,0,.18), 0 0 0 1px rgba(40,40,40,.45)"></div><div style="left:618px;top:868px;width:48px;height:32px;border:1px solid rgba(255,255,255,.45);border-radius:3px;background:linear-gradient(180deg,rgba(255,255,255,.30) 0%,rgba(255,255,255,.16) 48%,rgba(255,255,255,.07) 52%,rgba(255,255,255,.14) 100%);box-shadow:inset 0 0 0 1px rgba(0,0,0,.18), 0 0 0 1px rgba(40,40,40,.45)"></div><div style="left:670px;top:868px;width:48px;height:32px;border:1px solid rgba(255,255,255,.45);border-radius:3px;background:linear-gradient(180deg,rgba(255,255,255,.80),rgba(255,255,255,.55));box-shadow:inset 0 0 0 1px rgba(0,0,0,.18), 0 0 0 1px rgba(40,40,40,.45)"></div><div style="left:722px;top:868px;width:48px;height:32px;border:1px solid rgba(255,255,255,.45);border-radius:3px;background:linear-gradient(180deg,rgba(255,255,255,.30) 0%,rgba(255,255,255,.16) 48%,rgba(255,255,255,.07) 52%,rgba(255,255,255,.14) 100%);box-shadow:inset 0 0 0 1px rgba(0,0,0,.18), 0 0 0 1px rgba(40,40,40,.45)"></div><svg style="left:57px;top:871px" width="28" height="28" viewBox="0 0 28 28"><path d="M1 5.5H9L11 7.5H24V24H1Z" fill="#f3d98a" stroke="#c9a648" stroke-width=".8"/><path d="M4 4H12L14 6H26V10H4Z" fill="#f7e7ae"/><rect x="3.5" y="2.2" width="3" height="2" fill="#3db54a"/><rect x="11" y="3.6" width="3" height="2" fill="#d9342b"/><rect x="16.5" y="5.2" width="3" height="2" fill="#3e8ede"/><path d="M1 9.5H26V24H1Z" fill="#f6e39c" stroke="#c9a648" stroke-width=".8"/><path d="M5 26V17.5Q5 15.5 7 15.5H20Q22 15.5 22 17.5V26H18.5V19.5H8.5V26Z" fill="#7fc1ea" stroke="#3d8fc9" stroke-width=".9"/><circle cx="7" cy="17.5" r="2.5" fill="#fff" opacity=".85"/></svg><div style="left:113.5px;top:870px;width:25px;height:27px;background:#f4f4f4;border-radius:2px;box-shadow:0 1px 2px rgba(0,0,0,.4)"></div><div style="left:118.5px;top:876.5px;width:3.4px;height:3px;background:#e8231b;"></div><div style="left:123.7px;top:876.5px;width:3.4px;height:3px;background:#e8231b;"></div><div style="left:128.9px;top:876.5px;width:3.4px;height:3px;background:#e8231b;"></div><div style="left:118.5px;top:881.6px;width:3.4px;height:3px;background:#11893b;"></div><div style="left:123.7px;top:881.6px;width:3.4px;height:3px;background:#2f7de1;"></div><div style="left:128.9px;top:881.6px;width:3.4px;height:3px;background:#f9a51a;"></div><div style="left:118.5px;top:886.7px;width:3.4px;height:3px;background:#11893b;"></div><div style="left:123.7px;top:886.7px;width:3.4px;height:3px;background:#f9a51a;"></div><div style="left:128.9px;top:886.7px;width:3.4px;height:3px;background:#f9a51a;"></div><svg style="left:164px;top:869px" width="30" height="30" viewBox="0 0 30 30"><circle cx="9" cy="9.5" r="7" fill="#12a5e6"/><circle cx="18.5" cy="19" r="7" fill="#12a5e6"/><circle cx="13.8" cy="14.2" r="10.3" fill="#12a5e6"/><circle cx="22.8" cy="24" r="4" fill="#f9a51a" stroke="#7a4b00" stroke-width=".6"/></svg><span class="t" style="left:172px;top:871.8px;line-height:25px;font-size:18px;color:#ffffff;transform:scaleX(0.9571);font-weight:bold;">S</span><span class="t" style="left:185px;top:889.0px;line-height:9px;font-size:6.5px;color:#222;transform:scaleX(0.9931);font-weight:bold;">2</span><svg style="left:215px;top:870px" width="28" height="28" viewBox="0 0 28 28"><rect x="0.5" y="0.5" width="27" height="27" rx="2" fill="#10243e" stroke="#2b4566"/><g fill="none" stroke="#3ea7ea" stroke-width="1.7"><ellipse cx="14" cy="14.5" rx="4.2" ry="10" transform="rotate(28 14 14.5)"/><ellipse cx="14" cy="14.5" rx="4.2" ry="10" transform="rotate(-32 14 14.5)"/><ellipse cx="14" cy="15.5" rx="10" ry="4" /></g><circle cx="14" cy="14" r="2" fill="#9edcff"/></svg><svg style="left:266px;top:871px" width="26" height="26" viewBox="0 0 26 26"><circle cx="13" cy="13" r="12.3" fill="#db4437"/><path d="M13 13L2.4 6.8A12.3 12.3 0 0 0 12 25.2L17.8 15.6Z" fill="#0f9d58"/><path d="M13 13L12 25.3A12.3 12.3 0 0 0 24.4 8.5H13Z" fill="#ffcd40"/><circle cx="13" cy="13" r="5.7" fill="#f1f1f1"/><circle cx="13" cy="13" r="4.5" fill="#4285f4"/></svg><svg style="left:319px;top:871px" width="27" height="26" viewBox="0 0 19 18"><path d="M13.5 0.5 L18 2.5 V15.5 L13.5 17.5 L6 10.8 L2.2 13.8 L0.5 12.9 V5.1 L2.2 4.2 L6 7.2 Z" fill="#68217a" stroke="#ffffff" stroke-width="1.1"/><path d="M13.5 5.2 L9 9 L13.5 12.8 Z M2.3 6.8 V11.2 L4.6 9 Z" fill="#ffffff"/></svg><svg style="left:369px;top:870px" width="30" height="28" viewBox="0 0 30 28"><path d="M9 2L27 5L23 26L3 22Z" fill="#a8dff0" stroke="#5fa8c4" stroke-width=".8"/><path d="M9 2L27 5L26 9L8.5 6Z" fill="#dff4fb"/><path d="M23 26L27 5L28.5 7L25 27Z" fill="#c8b071"/><path d="M10 4L16 12L5 21L7.5 9Z" fill="#d8f2fa" opacity=".7"/></svg><svg style="left:425px;top:872px" width="23" height="24" viewBox="0 0 23 24"><rect x="0.5" y="0.5" width="22" height="22" rx="3.5" fill="#c4161c" stroke="#5d0b0e"/><rect x="2" y="1.5" width="19" height="9" rx="3" fill="#e4484d" opacity=".7"/><rect x="1" y="21" width="21" height="2.5" rx="1.2" fill="#3a4a66"/></svg><span class="t" style="left:430px;top:873.6px;line-height:22px;font-size:16px;color:#ffffff;transform:scaleX(1.0378);font-weight:bold;font-style:italic;">C</span><svg style="left:474px;top:869px" width="28" height="30" viewBox="0 0 28 30"><rect x="4" y="6" width="19" height="19" fill="#efe7a8" stroke="#4aa84d" stroke-width="2.2"/><path d="M6 1C7 8 10 12 13.5 16M21 1C20 8 17 12 13.5 16" stroke="#2a35d8" stroke-width="2.4" fill="none"/><circle cx="13.5" cy="18" r="3.3" fill="#e7544c" stroke="#a3211b"/><path d="M11.5 20.5L8.5 28M15.5 20.5L18.5 28" stroke="#e7544c" stroke-width="2.2"/></svg><svg style="left:527px;top:871px" width="25" height="25" viewBox="0 0 25 25"><rect x="0.5" y="0.5" width="24" height="24" fill="#0c5ea8" stroke="#062f57"/><rect x="1" y="1" width="23" height="11" fill="#1a73c4" opacity=".7"/></svg><span class="t" style="left:531.5px;top:874.0px;line-height:20px;font-size:14px;color:#9fd7ff;transform:scaleX(0.9343);font-weight:bold;">Ps</span><svg style="left:575px;top:870px" width="27" height="26" viewBox="0 0 27 26"><rect x="1.5" y="2" width="24" height="20" fill="#e9f0f7" stroke="#3c7fc0" stroke-width="1.4"/><rect x="3.5" y="4" width="20" height="15" fill="#5aa0d8"/><path d="M3.5 14C8 9 12 12 15 13C18 14 21 10 23.5 9V19H3.5Z" fill="#3f8f5c"/><path d="M3.5 16C9 13 15 17 23.5 14V19H3.5Z" fill="#6fb58a"/><path d="M0 0H4V1.5H1.5V4H0ZM27 0H23V1.5H25.5V4H27ZM0 24H4V22.5H1.5V20H0ZM27 24H23V22.5H25.5V20H27Z" fill="#2f76c2"/></svg><svg style="left:629px;top:869px" width="28" height="30" viewBox="0 0 28 30"><path d="M14 1L27 7V22L14 29L1 22V7Z" fill="#1e83c2" stroke="#0b3553" stroke-width="1"/><path d="M14 1L27 7L14 13L1 7Z" fill="#4fb0e6"/><path d="M14 13V29L27 22V7Z" fill="#155f90"/></svg><span class="t" style="left:634px;top:877.8px;line-height:17px;font-size:12px;color:#0a1c2b;transform:scaleX(1.1731);font-weight:bold;">TP</span><svg style="left:683px;top:870px" width="22" height="28" viewBox="0 0 22 28"><path d="M0.5 0.5H16L21.5 6V27.5H0.5Z" fill="#ffffff" stroke="#8b8b8b"/><path d="M16 0.5V6H21.5" fill="#e2e2e2" stroke="#8b8b8b"/><rect x="3" y="8" width="15" height="12" fill="#f4f4f4" stroke="#555" stroke-width=".8"/><rect x="3" y="8" width="15" height="2.5" fill="#2e4d9a"/><circle cx="7" cy="15" r="1.6" fill="#d9342b"/><circle cx="10.5" cy="15" r="1.6" fill="#2f7de1"/><circle cx="14" cy="15" r="1.6" fill="#3db54a"/></svg><svg style="left:733px;top:871px" width="28" height="26" viewBox="0 0 28 26"><rect x="0.5" y="2.5" width="23" height="19" fill="#eef1f4" stroke="#7c8894"/><rect x="2.5" y="5" width="10" height="13" fill="#5d9b73"/><rect x="2.5" y="5" width="10" height="6" fill="#6aa3d8"/><rect x="14.5" y="5" width="7" height="2" fill="#9aa7b3"/><rect x="20" y="0.5" width="2" height="6" fill="#2f7de1"/><circle cx="21" cy="19" r="6.2" fill="#f4f4f4" stroke="#999"/><rect x="18.3" y="16.3" width="5.4" height="5.4" fill="#e0262d"/></svg><span class="t" style="left:1373.5px;top:874.8px;line-height:15px;font-size:11px;color:#ffffff;transform:scaleX(0.8834);font-family:'Liberation Serif',serif;">CH</span><svg style="left:1392px;top:875px" width="14" height="12" viewBox="0 0 14 12"><rect x="0.5" y="4.5" width="13" height="7" rx="1" fill="#c9c9c9" stroke="#8e8e8e"/><path d="M2 7H12M2 9H12" stroke="#6f6f6f" stroke-width="1" stroke-dasharray="1.5 1"/><path d="M4 4C5 1 9 3 11 0.5" stroke="#b5b5b5" fill="none"/></svg><svg style="left:1411px;top:875px" width="13" height="13" viewBox="0 0 13 13"><circle cx="6.5" cy="6.5" r="6" fill="#1f37b7" stroke="#b9c4ea" stroke-width="1"/></svg><span class="t" style="left:1415px;top:875.2px;line-height:14px;font-size:10px;color:#ffffff;transform:scaleX(0.9003);font-weight:bold;">?</span><svg style="left:1432px;top:873px" width="9" height="7" viewBox="0 0 9 7"><path d="M2.5 1H8L6.5 5H1Z" fill="none" stroke="#fff" stroke-width="1.2"/></svg><svg style="left:1433.5px;top:885.0px" width="5" height="3" viewBox="0 0 5 3"><path d="M0 0H5L2.5 3Z" fill="#ffffff"/></svg><svg style="left:1447.5px;top:882px" width="7" height="4" viewBox="0 0 7 4"><path d="M0 4L3.5 0L7 4Z" fill="#fff"/></svg><svg style="left:1464px;top:876px" width="15" height="15" viewBox="0 0 15 15"><path d="M1 1C4 0 7 2 7 6L3 7C1 5 1 3 1 1Z" fill="#7cc043"/><circle cx="8.5" cy="9" r="4.7" fill="#f9a51a" stroke="#9a6a12" stroke-width=".6"/></svg><span class="t" style="left:1470.7px;top:880.7px;line-height:10px;font-size:7px;color:#222;transform:scaleX(0.9728);font-weight:bold;">2</span><svg style="left:1485px;top:878px" width="14" height="10" viewBox="0 0 14 10"><path d="M1 9.5V8M3.5 9.5V7M6.5 9.5V5M9.5 9.5V3M12.5 9.5V0.5" stroke="#fff" stroke-width="1.8"/></svg><svg style="left:1506px;top:877px" width="13" height="13" viewBox="0 0 13 13"><path d="M0.5 4.5H3L7 1V12L3 8.5H0.5Z" fill="#e8e8e8" stroke="#999" stroke-width=".5"/><path d="M9 3.5Q11.5 6.5 9 9.5" stroke="#fff" fill="none" stroke-width="1"/></svg><span class="t" style="left:1546px;top:868.8px;line-height:17px;font-size:12px;color:#ffffff;transform:scaleX(0.8134);">1:38</span><span class="t" style="left:1529px;top:883.3px;line-height:17px;font-size:12px;color:#ffffff;transform:scaleX(0.8991);">27/12/2016</span><div style="left:1588px;top:868px;width:12px;height:32px;border:1px solid rgba(255,255,255,.45);background:linear-gradient(90deg,rgba(255,255,255,.32),rgba(255,255,255,.12))"></div><div style="left:567px;top:1px;width:880px;height:648px;border-radius:7px;background:linear-gradient(180deg,#30353e 0,#2b3039 30px,#2a2e36 100%);border:1px solid #15171b;box-shadow:inset 0 0 0 1px rgba(200,210,225,.55), 0 0 8px rgba(0,0,0,.55)"></div><div style="left:1150px;top:3px;width:295px;height:21px;background:linear-gradient(90deg,rgba(120,128,142,0),rgba(120,128,142,.28));border-top-right-radius:6px"></div><div style="left:1441px;top:9px;width:5px;height:634px;background:linear-gradient(180deg,rgba(130,138,150,.7),rgba(90,96,108,.5) 60%,rgba(60,66,76,.3))"></div><div style="left:569px;top:24px;width:4px;height:620px;background:linear-gradient(180deg,rgba(120,128,140,.45),rgba(60,66,76,.2))"></div><div style="left:584px;top:4px;width:172px;height:17px;border-radius:9px;background:rgba(225,228,233,.46);filter:blur(5px)"></div><svg style="left:573px;top:7px" width="13" height="12" viewBox="0 0 13 12"><rect x="1" y="1" width="11" height="10" fill="#f3f7fb" stroke="#3c7fc0" stroke-width=".8"/><rect x="2.3" y="2.5" width="8.4" height="7" fill="#7ab4e4"/><path d="M2.3 7C5 5 7 8 10.7 5.5V9.5H2.3Z" fill="#2d6b45"/><path d="M0 0H3V1H1V3H0ZM13 0H10V1H12V3H13ZM0 12H3V11H1V9H0ZM13 12H10V11H12V9H13Z" fill="#2f76c2"/></svg><span class="t" style="left:591px;top:4.8px;line-height:17px;font-size:12px;color:#15171b;transform:scaleX(0.8580);">06492CC0 - Windows 相片檢視器</span><div style="left:1325px;top:3px;width:16px;height:16px;border-radius:8px;background:#e0d860;filter:blur(2.5px);opacity:.9"></div><div style="left:1355.5px;top:1px;width:87px;height:17px;border:1px solid rgba(215,222,232,.65);border-top:none;border-radius:0 0 5px 5px;background:linear-gradient(180deg,rgba(140,148,162,.35),rgba(90,98,112,.25))"></div><div style="left:1379.5px;top:2px;width:1px;height:15px;background:rgba(215,222,232,.6);"></div><div style="left:1403px;top:2px;width:1px;height:15px;background:rgba(215,222,232,.6);"></div><div style="left:1364px;top:9px;width:10px;height:3.5px;background:#ffffff;border-radius:1px;box-shadow:0 0 1px #333"></div><svg style="left:1386px;top:4px" width="10" height="9" viewBox="0 0 10 9"><rect x="1" y="1" width="8" height="7" fill="none" stroke="#fff" stroke-width="1.8"/><rect x="2.5" y="3.2" width="5" height="1.6" fill="#fff" opacity=".6"/></svg><svg style="left:1417px;top:4px" width="10" height="9" viewBox="0 0 10 9"><path d="M1.2 0.8L8.8 8.2M8.8 0.8L1.2 8.2" stroke="#fff" stroke-width="2.3"/></svg><div style="left:572.5px;top:24px;width:869px;height:573px;background:#eef3fa;border:1px solid #f8fafd;border-bottom:1px solid #6d747f;"></div><div style="left:573.5px;top:25px;width:867px;height:24px;background:linear-gradient(180deg,#fbfcfe 0,#eef3fa 10%,#e8eff8 46%,#dae5f2 52%,#dbe6f3 92%,#aebdd2 97%,#c9d6e6 100%)"></div><span class="t" style="left:583px;top:29.8px;line-height:15px;font-size:11px;color:#1e395b;transform:scaleX(0.8600);">檔案(F)</span><span class="t" style="left:640px;top:29.8px;line-height:15px;font-size:11px;color:#1e395b;transform:scaleX(0.8862);">列印(P)</span><span class="t" style="left:698.5px;top:29.8px;line-height:15px;font-size:11px;color:#1e395b;transform:scaleX(0.8863);">電子郵件(E)</span><span class="t" style="left:767px;top:29.8px;line-height:15px;font-size:11px;color:#1e395b;transform:scaleX(0.8986);">燒錄(U)</span><span class="t" style="left:826.5px;top:29.8px;line-height:15px;font-size:11px;color:#1e395b;transform:scaleX(0.9237);">開啟(O)</span><svg style="left:621.0px;top:35.4px" width="6" height="3.2" viewBox="0 0 6 3.2"><path d="M0 0H6L3.0 3.2Z" fill="#14233d"/></svg><svg style="left:679.5px;top:35.4px" width="6" height="3.2" viewBox="0 0 6 3.2"><path d="M0 0H6L3.0 3.2Z" fill="#14233d"/></svg><svg style="left:808.0px;top:35.4px" width="6" height="3.2" viewBox="0 0 6 3.2"><path d="M0 0H6L3.0 3.2Z" fill="#14233d"/></svg><svg style="left:869.5px;top:35.4px" width="6" height="3.2" viewBox="0 0 6 3.2"><path d="M0 0H6L3.0 3.2Z" fill="#14233d"/></svg><svg style="left:1418px;top:28.5px" width="15" height="15" viewBox="0 0 15 15"><defs><radialGradient id="hq" cx="40%" cy="30%" r="70%"><stop offset="0" stop-color="#6f8fe8"/><stop offset=".5" stop-color="#2240b8"/><stop offset="1" stop-color="#0d1f7a"/></radialGradient></defs><circle cx="7.5" cy="7.5" r="6.6" fill="url(#hq)" stroke="#9aa3b5" stroke-width="1.1"/></svg><span class="t" style="left:1422.6px;top:29.3px;line-height:15px;font-size:11px;color:#ffffff;transform:scaleX(0.8910);font-weight:bold;">?</span><div style="left:573px;top:597px;width:868px;height:47px;background:linear-gradient(180deg,#20242c,#242933 50%,#20242c)"></div><div style="left:838.5px;top:608px;width:337px;height:28px;border-radius:14px;background:linear-gradient(180deg,#5b616b,#50565f 50%,#494e57);border:1px solid #3a3f47;box-shadow:0 0 0 1px rgba(20,22,26,.6)"></div><div style="left:946px;top:612px;width:122px;height:20.5px;border-radius:8px;background:linear-gradient(180deg,#9aa0a8 0,#6a7079 45%,#4c525b 55%,#5b616a 100%);border:1px solid #2c3037"></div><svg style="left:862px;top:613px" width="18" height="18" viewBox="0 0 18 18"><circle cx="10.5" cy="7" r="5.3" fill="#c5d6f5" stroke="#2a56d6" stroke-width="2"/><path d="M6.6 11L2 15.8" stroke="#2a56d6" stroke-width="3" stroke-linecap="round"/><path d="M10.5 4.3V9.7M7.8 7H13.2" stroke="#1f3fb0" stroke-width="1.6"/></svg><svg style="left:881.5px;top:620.75px" width="6" height="3.5" viewBox="0 0 6 3.5"><path d="M0 0H6L3.0 3.5Z" fill="#3f7af0"/></svg><svg style="left:912px;top:614px" width="16" height="15" viewBox="0 0 16 15"><path d="M1 4.5V1H4.5M11.5 1H15V4.5M15 10.5V14H11.5M4.5 14H1V10.5" stroke="#2f63e0" stroke-width="2" fill="none"/><rect x="4" y="4.5" width="8" height="6" fill="#9db9f2" stroke="#2f63e0" stroke-width="1.6"/></svg><svg style="left:959.5px;top:615px" width="14" height="14" viewBox="0 0 14 14"><rect x="0.5" y="1" width="3" height="12" fill="#2a56d6"/><path d="M13.5 1V13L4.5 7Z" fill="#2a56d6"/></svg><svg style="left:1040px;top:615px" width="14" height="14" viewBox="0 0 14 14"><rect x="10.5" y="1" width="3" height="12" fill="#2a56d6"/><path d="M0.5 1V13L9.5 7Z" fill="#2a56d6"/></svg><svg style="left:985px;top:601px" width="42" height="42" viewBox="0 0 42 42"><defs><radialGradient id="pb" cx="50%" cy="78%" r="75%"><stop offset="0" stop-color="#58d2ff"/><stop offset=".35" stop-color="#1d6fe8"/><stop offset=".75" stop-color="#0f2fae"/><stop offset="1" stop-color="#0a1c6e"/></radialGradient><linearGradient id="pg" x1="0" y1="0" x2="0" y2="1"><stop offset="0" stop-color="#ffffff" stop-opacity=".85"/><stop offset="1" stop-color="#ffffff" stop-opacity=".05"/></linearGradient></defs><circle cx="21" cy="21" r="20.3" fill="#24282f"/><circle cx="21" cy="21" r="19.3" fill="#626872"/><circle cx="21" cy="21" r="16" fill="url(#pb)" stroke="#dfe9ff" stroke-width="1"/><ellipse cx="21" cy="13.5" rx="12.5" ry="8" fill="url(#pg)"/><rect x="12.5" y="14" width="17" height="13.5" fill="#f2f5f9" stroke="#c8d0da" stroke-width=".8"/><rect x="14.5" y="16" width="13" height="9.5" fill="#6aa5d9"/><path d="M14.5 22C18 19 21 23 27.5 20V25.5H14.5Z" fill="#3f8a5a"/></svg><svg style="left:1080px;top:613px" width="15" height="17" viewBox="0 0 15 17"><path d="M5 5.5C9 3.5 13.5 6 13 10.5C12.5 14.5 8 16 4.5 13.8" stroke="#2a56d6" stroke-width="2.2" fill="none"/><path d="M0.5 5.8L7 0.8L7.6 8.6Z" fill="#2a56d6"/></svg><svg style="left:1108.5px;top:613px" width="15" height="17" viewBox="0 0 15 17"><path d="M10 5.5C6 3.5 1.5 6 2 10.5C2.5 14.5 7 16 10.5 13.8" stroke="#2a56d6" stroke-width="2.2" fill="none"/><path d="M14.5 5.8L8 0.8L7.4 8.6Z" fill="#2a56d6"/></svg><div style="left:1135px;top:612px;width:1px;height:19px;background:#3b4048;"></div><svg style="left:1147px;top:615px" width="14" height="14" viewBox="0 0 14 14"><path d="M1.5 1.5L12.5 12.5M12.5 1.5L1.5 12.5" stroke="#d81f26" stroke-width="2.6" stroke-linecap="round"/></svg><div style="left:410px;top:170px;width:437px;height:291px;border-radius:7px;border:1px solid #1c1f24;overflow:hidden;box-shadow:1px 2px 9px rgba(0,0,0,.75),0 0 3px rgba(0,0,0,.65)"><div style="left:0;top:0;width:437px;height:291px;background:linear-gradient(180deg,#b5d4f4 0,#a4caf0 12px,#b9d7f4 24px,#c4ddf5 100%)"></div><div style="left:0;top:0;width:170px;height:291px;background:linear-gradient(90deg,#30353c 0,#262a31 120px,#1f2329 150px,rgba(60,75,95,.6) 160px,rgba(120,150,185,0) 170px)"></div><div style="left:0;top:0;width:435px;height:289px;border-radius:6px;border:1px solid rgba(235,242,250,.75)"></div></div><div style="left:841px;top:193px;width:5px;height:65px;background:linear-gradient(180deg,#cfe2f6,#e6f0fb)"></div><div style="left:412px;top:172px;width:155px;height:21px;background:linear-gradient(90deg,rgba(222,224,228,.88) 0,rgba(216,218,222,.86) 50%,rgba(150,154,160,.55) 62%,rgba(70,74,80,.2) 74%,rgba(50,54,60,0) 82%)"></div><div style="left:412px;top:172px;width:130px;height:21px;background:linear-gradient(180deg,rgba(70,74,82,.5) 0,rgba(70,74,82,0) 5px,rgba(70,74,82,0) 15px,rgba(70,74,82,.35) 21px);-webkit-mask-image:linear-gradient(90deg,#000 0,#000 70%,transparent 100%)"></div><div style="left:411px;top:193px;width:4px;height:65px;background:linear-gradient(180deg,#c8cacd 0,#9a9da2 22px,#c9cbce 44px,#eeeeef 64px)"></div><svg style="left:416px;top:177px" width="12" height="10" viewBox="0 0 12 10"><rect x="0.5" y="0.5" width="11" height="9" fill="#f4f6f8" stroke="#7d8590"/><rect x="0.5" y="0.5" width="11" height="2" fill="#9aa3ae"/><rect x="1.8" y="3.5" width="4" height="5" fill="#3c8d8a"/><rect x="7" y="3.5" width="1.3" height="4" fill="#8d949c"/></svg><span class="t" style="left:433.5px;top:174.3px;line-height:17px;font-size:12px;color:#15171b;transform:scaleX(0.9315);">MainWindow</span><div style="left:755.5px;top:170px;width:85px;height:16.5px;border:1px solid #5d6c80;border-top:none;border-radius:0 0 4px 4px;background:linear-gradient(180deg,#d6e6f7 0,#c0d5ec 45%,#a9c3e0 50%,#bcd3ec 100%)"></div><div style="left:802px;top:170px;width:38.5px;height:16.5px;border:1px solid #5b1e18;border-top:none;border-radius:0 0 4px 0;background:linear-gradient(180deg,#efb9ad 0,#dc7f6d 45%,#c8432c 52%,#d9654b 100%)"></div><div style="left:779px;top:171px;width:1px;height:15px;background:#5d6c80;"></div><div style="left:762.5px;top:179px;width:10px;height:4px;background:#ffffff;border:1px solid #4b5563;border-radius:1px"></div><svg style="left:785px;top:173px" width="11" height="10" viewBox="0 0 11 10"><rect x="1" y="1" width="9" height="8" fill="#fff" stroke="#4b5563" stroke-width="1"/><rect x="3.5" y="3.5" width="4" height="3" fill="#c0d5ec" stroke="#4b5563" stroke-width="1"/></svg><svg style="left:815px;top:173px" width="12" height="10" viewBox="0 0 12 10"><path d="M1.8 1L10.2 9M10.2 1L1.8 9" stroke="#4a2a26" stroke-width="3.6"/><path d="M1.8 1L10.2 9M10.2 1L1.8 9" stroke="#fff" stroke-width="2.1"/></svg><div style="left:415px;top:194px;width:426px;height:262px;background:#ffffff;border:1px solid #5e6672;"></div><div style="left:416.5px;top:195.5px;width:61px;height:17.5px;border:1px solid #2fa0d4;border-radius:2px;background:linear-gradient(180deg,#f1f7fb 0,#e7f1f8 48%,#d4e7f2 52%,#c4dfee 100%);box-shadow:inset 0 0 0 1px rgba(255,255,255,.6)"></div><div style="left:416.5px;top:195.5px;width:61px;height:17.5px;border:1px dotted rgba(255,255,255,.85);border-radius:2px"></div><span class="t" style="left:434px;top:196.6px;line-height:17px;font-size:12px;color:#000000;transform:scaleX(0.8856);">Open</span><svg width="0" height="0" style="left:0;top:0"><defs><g id="boom" shape-rendering="crispEdges"><path fill="#f5d400" d="M27 0h4v1h-4zM32 0h2v1h-2zM27 1h1v1h-1zM30 1h6v1h-6zM26 2h2v1h-2zM35 2h1v1h-1zM25 3h2v1h-2zM35 3h2v1h-2zM25 4h1v1h-1zM36 4h1v1h-1zM23 5h2v1h-2zM14 10h2v1h-2zM10 11h2v1h-2zM14 11h1v1h-1zM12 12h3v1h-3zM40 13h1v1h-1zM40 14h2v1h-2zM8 15h1v1h-1zM41 15h6v1h-6zM8 16h1v1h-1zM42 16h1v1h-1zM46 16h2v1h-2zM8 17h1v1h-1zM47 17h1v1h-1zM6 18h2v1h-2zM6 19h2v1h-2zM15 19h3v1h-3zM7 20h1v1h-1zM12 20h6v1h-6zM7 21h5v1h-5zM17 21h2v1h-2zM7 22h1v1h-1zM17 22h3v1h-3zM18 23h2v1h-2zM50 25h1v1h-1zM54 25h2v1h-2zM50 26h4v1h-4zM56 26h1v1h-1zM3 27h2v1h-2zM56 27h1v1h-1zM0 28h4v1h-4zM57 28h1v1h-1zM0 29h1v1h-1zM56 29h2v1h-2zM0 30h2v1h-2zM55 30h2v1h-2zM1 31h1v1h-1zM48 31h2v1h-2zM48 32h1v1h-1zM50 32h4v1h-4zM48 33h1v1h-1zM53 33h1v1h-1zM48 34h2v1h-2zM53 34h1v1h-1zM4 35h2v1h-2zM49 35h1v1h-1zM53 35h1v1h-1zM5 36h1v1h-1zM49 36h1v1h-1zM53 36h1v1h-1zM5 37h2v1h-2zM49 37h2v1h-2zM6 38h1v1h-1zM14 38h4v1h-4zM48 38h3v1h-3zM7 39h1v1h-1zM13 39h9v1h-9zM48 39h1v1h-1zM8 40h5v1h-5zM11 41h1v1h-1zM23 41h4v1h-4zM24 42h2v1h-2zM38 44h1v1h-1zM38 45h2v1h-2zM41 45h1v1h-1zM39 46h1v1h-1zM41 46h2v1h-2zM19 47h1v1h-1zM18 48h1v1h-1zM18 49h1v1h-1zM18 50h1v1h-1zM12 51h4v1h-4zM17 51h1v1h-1zM15 52h1v1h-1zM17 52h1v1h-1zM16 53h1v1h-1z"/><path fill="#7b0000" d="M18 8h2v1h-2zM21 8h1v1h-1zM26 8h8v1h-8zM16 9h4v1h-4zM24 9h2v1h-2zM35 9h1v1h-1zM22 10h1v1h-1zM35 10h1v1h-1zM15 11h1v1h-1zM23 11h1v1h-1zM34 11h3v1h-3zM15 12h1v1h-1zM23 12h2v1h-2zM35 12h1v1h-1zM37 12h1v1h-1zM15 13h1v1h-1zM35 13h1v1h-1zM37 13h2v1h-2zM15 14h1v1h-1zM38 14h1v1h-1zM15 15h1v1h-1zM36 15h3v1h-3zM13 16h3v1h-3zM17 16h2v1h-2zM20 16h1v1h-1zM24 16h2v1h-2zM37 16h2v1h-2zM11 17h2v1h-2zM39 17h5v1h-5zM11 18h2v1h-2zM36 18h1v1h-1zM39 18h1v1h-1zM41 18h4v1h-4zM11 19h1v1h-1zM37 19h1v1h-1zM44 19h1v1h-1zM11 20h1v1h-1zM45 20h1v1h-1zM44 21h1v1h-1zM46 21h1v1h-1zM8 22h1v1h-1zM10 22h1v1h-1zM46 22h1v1h-1zM46 23h1v1h-1zM6 24h1v1h-1zM46 24h1v1h-1zM6 25h1v1h-1zM45 25h1v1h-1zM6 26h2v1h-2zM45 26h1v1h-1zM47 26h1v1h-1zM47 27h1v1h-1zM6 28h1v1h-1zM47 28h1v1h-1zM6 29h1v1h-1zM46 29h1v1h-1zM6 30h1v1h-1zM45 30h2v1h-2zM6 31h1v1h-1zM45 31h1v1h-1zM6 32h1v1h-1zM45 32h1v1h-1zM6 33h2v1h-2zM44 33h1v1h-1zM7 34h1v1h-1zM43 34h2v1h-2zM8 35h1v1h-1zM44 35h1v1h-1zM9 36h1v1h-1zM11 36h1v1h-1zM42 36h2v1h-2zM9 37h2v1h-2zM12 37h1v1h-1zM30 37h1v1h-1zM42 37h1v1h-1zM44 37h1v1h-1zM12 38h1v1h-1zM11 39h2v1h-2zM45 39h1v1h-1zM45 41h1v1h-1zM43 42h1v1h-1zM45 42h1v1h-1zM13 43h1v1h-1zM44 43h1v1h-1zM13 44h1v1h-1zM42 44h2v1h-2zM13 45h1v1h-1zM15 45h1v1h-1zM42 45h1v1h-1zM14 46h5v1h-5zM20 46h1v1h-1zM22 46h1v1h-1zM31 47h1v1h-1zM33 47h3v1h-3zM21 48h1v1h-1zM23 48h1v1h-1zM31 48h2v1h-2zM22 49h4v1h-4zM31 49h1v1h-1zM26 50h1v1h-1zM29 50h3v1h-3zM24 51h1v1h-1zM26 51h1v1h-1zM28 51h2v1h-2z"/><path fill="#960804" d="M20 8h1v1h-1zM20 9h1v1h-1zM22 9h2v1h-2zM28 9h1v1h-1zM30 9h3v1h-3zM34 9h1v1h-1zM23 10h1v1h-1zM25 10h1v1h-1zM16 11h1v1h-1zM24 11h1v1h-1zM36 12h1v1h-1zM36 13h1v1h-1zM23 14h1v1h-1zM37 14h1v1h-1zM16 15h1v1h-1zM23 15h1v1h-1zM19 16h1v1h-1zM21 16h1v1h-1zM13 17h1v1h-1zM24 17h1v1h-1zM40 18h1v1h-1zM12 19h1v1h-1zM43 19h1v1h-1zM44 20h1v1h-1zM7 23h1v1h-1zM45 23h1v1h-1zM46 25h1v1h-1zM6 27h2v1h-2zM9 35h1v1h-1zM43 37h1v1h-1zM11 38h1v1h-1zM44 38h1v1h-1zM43 39h1v1h-1zM44 40h2v1h-2zM12 42h1v1h-1zM35 45h2v1h-2zM19 46h1v1h-1zM36 46h3v1h-3zM21 47h1v1h-1zM24 50h1v1h-1zM25 51h1v1h-1zM27 51h1v1h-1z"/><path fill="#b45014" d="M21 9h1v1h-1zM27 9h1v1h-1zM29 9h1v1h-1zM18 10h1v1h-1zM24 10h1v1h-1zM27 10h1v1h-1zM31 10h1v1h-1zM34 10h1v1h-1zM21 11h1v1h-1zM26 11h1v1h-1zM17 12h1v1h-1zM16 13h1v1h-1zM23 13h2v1h-2zM34 13h1v1h-1zM21 14h1v1h-1zM24 14h1v1h-1zM36 14h1v1h-1zM34 15h1v1h-1zM16 16h1v1h-1zM22 16h2v1h-2zM22 17h1v1h-1zM25 17h1v1h-1zM38 17h1v1h-1zM13 19h1v1h-1zM35 19h2v1h-2zM36 20h1v1h-1zM43 20h1v1h-1zM45 21h1v1h-1zM20 22h2v1h-2zM7 24h1v1h-1zM45 28h1v1h-1zM45 29h1v1h-1zM7 31h1v1h-1zM7 32h1v1h-1zM14 32h1v1h-1zM43 32h1v1h-1zM8 33h1v1h-1zM9 34h1v1h-1zM34 35h1v1h-1zM36 35h1v1h-1zM42 35h2v1h-2zM32 36h1v1h-1zM34 36h1v1h-1zM11 37h1v1h-1zM29 37h1v1h-1zM31 39h1v1h-1zM32 42h1v1h-1zM20 43h1v1h-1zM40 43h1v1h-1zM43 43h1v1h-1zM16 44h1v1h-1zM20 44h1v1h-1zM35 44h1v1h-1zM41 44h1v1h-1zM14 45h1v1h-1zM40 45h1v1h-1zM21 46h1v1h-1zM33 46h2v1h-2zM22 47h1v1h-1zM22 48h1v1h-1zM24 48h1v1h-1zM27 49h2v1h-2z"/><path fill="#d6100c" d="M26 9h1v1h-1zM33 9h1v1h-1zM16 10h1v1h-1zM21 10h1v1h-1zM33 10h1v1h-1zM18 11h1v1h-1zM22 11h1v1h-1zM16 12h1v1h-1zM25 12h1v1h-1zM16 14h1v1h-1zM25 14h1v1h-1zM17 15h1v1h-1zM19 15h1v1h-1zM21 15h1v1h-1zM24 15h2v1h-2zM14 17h4v1h-4zM36 17h2v1h-2zM20 18h2v1h-2zM24 18h1v1h-1zM38 18h1v1h-1zM39 19h1v1h-1zM37 20h1v1h-1zM37 21h1v1h-1zM9 22h1v1h-1zM11 22h1v1h-1zM15 22h2v1h-2zM9 23h1v1h-1zM14 23h2v1h-2zM17 23h1v1h-1zM37 23h1v1h-1zM8 24h1v1h-1zM13 24h1v1h-1zM7 25h1v1h-1zM34 25h1v1h-1zM39 25h1v1h-1zM39 26h1v1h-1zM46 26h1v1h-1zM38 27h1v1h-1zM30 28h1v1h-1zM35 28h1v1h-1zM46 28h1v1h-1zM17 29h1v1h-1zM34 29h3v1h-3zM17 30h2v1h-2zM32 31h1v1h-1zM44 31h1v1h-1zM16 32h1v1h-1zM18 32h1v1h-1zM44 32h1v1h-1zM8 34h1v1h-1zM10 35h1v1h-1zM32 35h1v1h-1zM10 36h1v1h-1zM40 36h2v1h-2zM28 37h1v1h-1zM23 39h2v1h-2zM29 39h1v1h-1zM44 39h1v1h-1zM12 41h2v1h-2zM14 42h1v1h-1zM44 42h1v1h-1zM42 43h1v1h-1zM14 44h1v1h-1zM34 44h1v1h-1zM16 45h4v1h-4zM21 45h1v1h-1zM37 45h1v1h-1zM35 46h1v1h-1zM30 48h1v1h-1zM29 49h1v1h-1zM25 50h1v1h-1zM27 50h2v1h-2z"/><path fill="#ff2d0a" d="M17 10h1v1h-1zM19 10h1v1h-1zM26 10h1v1h-1zM28 10h1v1h-1zM26 12h3v1h-3zM17 13h1v1h-1zM22 13h1v1h-1zM27 13h1v1h-1zM22 14h1v1h-1zM35 14h1v1h-1zM18 15h1v1h-1zM34 16h2v1h-2zM18 17h1v1h-1zM20 17h2v1h-2zM32 17h1v1h-1zM34 17h1v1h-1zM13 18h1v1h-1zM17 18h3v1h-3zM23 18h1v1h-1zM32 18h1v1h-1zM34 18h1v1h-1zM21 19h4v1h-4zM38 20h1v1h-1zM12 21h1v1h-1zM19 21h1v1h-1zM21 21h1v1h-1zM28 21h1v1h-1zM38 21h2v1h-2zM12 22h1v1h-1zM14 22h1v1h-1zM27 22h1v1h-1zM37 22h3v1h-3zM45 22h1v1h-1zM8 23h1v1h-1zM10 23h1v1h-1zM12 23h2v1h-2zM16 23h1v1h-1zM36 23h1v1h-1zM38 23h2v1h-2zM11 24h2v1h-2zM14 24h1v1h-1zM17 24h1v1h-1zM35 24h5v1h-5zM45 24h1v1h-1zM8 25h1v1h-1zM14 25h5v1h-5zM35 25h4v1h-4zM14 26h1v1h-1zM18 26h1v1h-1zM28 26h2v1h-2zM33 26h5v1h-5zM44 26h1v1h-1zM15 27h1v1h-1zM17 27h1v1h-1zM28 27h8v1h-8zM39 27h1v1h-1zM46 27h1v1h-1zM7 28h1v1h-1zM14 28h2v1h-2zM17 28h1v1h-1zM29 28h1v1h-1zM31 28h4v1h-4zM36 28h4v1h-4zM44 28h1v1h-1zM7 29h2v1h-2zM14 29h3v1h-3zM30 29h4v1h-4zM37 29h1v1h-1zM7 30h1v1h-1zM15 30h2v1h-2zM30 30h5v1h-5zM44 30h1v1h-1zM8 31h1v1h-1zM15 31h2v1h-2zM18 31h1v1h-1zM30 31h2v1h-2zM33 31h1v1h-1zM17 32h1v1h-1zM30 32h3v1h-3zM17 33h1v1h-1zM30 33h3v1h-3zM43 33h1v1h-1zM30 34h2v1h-2zM30 35h2v1h-2zM33 35h1v1h-1zM38 35h1v1h-1zM21 36h2v1h-2zM30 36h2v1h-2zM36 36h1v1h-1zM21 37h2v1h-2zM27 37h1v1h-1zM41 37h1v1h-1zM21 38h9v1h-9zM43 38h1v1h-1zM22 39h1v1h-1zM25 39h4v1h-4zM30 39h1v1h-1zM23 40h4v1h-4zM44 41h1v1h-1zM13 42h1v1h-1zM14 43h2v1h-2zM33 43h1v1h-1zM18 44h2v1h-2zM33 44h1v1h-1zM39 44h2v1h-2zM20 45h1v1h-1zM33 45h2v1h-2zM32 46h1v1h-1zM32 47h1v1h-1zM30 49h1v1h-1z"/><path fill="#ff6e6e" d="M20 10h1v1h-1zM30 10h1v1h-1zM34 12h1v1h-1zM26 13h1v1h-1zM17 14h1v1h-1zM34 14h1v1h-1zM15 18h1v1h-1zM25 18h2v1h-2zM35 18h1v1h-1zM14 19h1v1h-1zM20 19h1v1h-1zM31 19h1v1h-1zM41 19h1v1h-1zM18 20h3v1h-3zM24 20h2v1h-2zM39 20h1v1h-1zM41 20h1v1h-1zM13 21h1v1h-1zM25 21h1v1h-1zM29 21h1v1h-1zM13 22h1v1h-1zM24 22h1v1h-1zM26 22h1v1h-1zM20 23h1v1h-1zM9 24h2v1h-2zM15 24h2v1h-2zM10 25h1v1h-1zM13 25h1v1h-1zM44 25h1v1h-1zM15 26h3v1h-3zM31 26h1v1h-1zM38 26h1v1h-1zM8 27h1v1h-1zM14 27h1v1h-1zM16 27h1v1h-1zM37 27h1v1h-1zM16 28h1v1h-1zM38 29h1v1h-1zM44 29h1v1h-1zM17 31h1v1h-1zM20 32h1v1h-1zM16 33h1v1h-1zM10 34h1v1h-1zM20 34h1v1h-1zM36 34h1v1h-1zM41 34h1v1h-1zM20 35h1v1h-1zM29 35h1v1h-1zM33 36h1v1h-1zM18 37h1v1h-1zM23 37h1v1h-1zM31 37h2v1h-2zM42 39h1v1h-1zM16 42h1v1h-1zM22 42h1v1h-1zM33 42h1v1h-1zM42 42h1v1h-1zM22 43h1v1h-1zM34 43h1v1h-1zM21 44h1v1h-1zM32 44h1v1h-1zM23 47h1v1h-1z"/><path fill="#ffa00a" d="M29 10h1v1h-1zM17 11h1v1h-1zM20 11h1v1h-1zM25 11h1v1h-1zM27 11h3v1h-3zM33 11h1v1h-1zM20 12h3v1h-3zM30 12h1v1h-1zM25 13h1v1h-1zM18 14h1v1h-1zM26 14h1v1h-1zM20 15h1v1h-1zM22 15h1v1h-1zM33 15h1v1h-1zM35 15h1v1h-1zM26 16h2v1h-2zM33 16h1v1h-1zM36 16h1v1h-1zM19 17h1v1h-1zM23 17h1v1h-1zM33 17h1v1h-1zM35 17h1v1h-1zM14 18h1v1h-1zM22 18h1v1h-1zM31 18h1v1h-1zM37 18h1v1h-1zM25 19h1v1h-1zM30 19h1v1h-1zM38 19h1v1h-1zM40 19h1v1h-1zM22 20h1v1h-1zM30 20h1v1h-1zM22 21h1v1h-1zM30 21h1v1h-1zM22 22h1v1h-1zM25 22h1v1h-1zM28 22h1v1h-1zM44 22h1v1h-1zM11 23h1v1h-1zM24 23h1v1h-1zM28 23h1v1h-1zM29 24h1v1h-1zM12 25h1v1h-1zM13 26h1v1h-1zM9 27h1v1h-1zM36 27h1v1h-1zM9 28h1v1h-1zM9 29h1v1h-1zM14 30h1v1h-1zM43 30h1v1h-1zM19 31h1v1h-1zM41 31h1v1h-1zM13 32h1v1h-1zM9 33h2v1h-2zM13 33h1v1h-1zM33 33h1v1h-1zM32 34h1v1h-1zM38 34h2v1h-2zM19 35h1v1h-1zM35 35h1v1h-1zM37 35h1v1h-1zM40 35h2v1h-2zM29 36h1v1h-1zM35 36h1v1h-1zM37 36h3v1h-3zM13 37h2v1h-2zM20 37h1v1h-1zM13 38h1v1h-1zM20 38h1v1h-1zM30 38h3v1h-3zM42 38h1v1h-1zM27 40h2v1h-2zM30 40h2v1h-2zM43 40h1v1h-1zM14 41h2v1h-2zM31 41h1v1h-1zM43 41h1v1h-1zM21 42h1v1h-1zM35 42h1v1h-1zM16 43h3v1h-3zM21 43h1v1h-1zM32 43h1v1h-1zM41 43h1v1h-1zM15 44h1v1h-1zM17 44h1v1h-1zM22 44h1v1h-1zM36 44h2v1h-2zM22 45h1v1h-1zM40 46h1v1h-1zM27 48h1v1h-1zM29 48h1v1h-1zM26 49h1v1h-1z"/><path fill="#e6963c" d="M32 10h1v1h-1zM30 11h1v1h-1zM26 15h1v1h-1zM16 18h1v1h-1zM33 18h1v1h-1zM18 19h1v1h-1zM14 21h1v1h-1zM26 21h2v1h-2zM43 21h1v1h-1zM29 22h1v1h-1zM44 23h1v1h-1zM44 24h1v1h-1zM9 25h1v1h-1zM8 30h1v1h-1zM14 31h1v1h-1zM43 31h1v1h-1zM15 32h1v1h-1zM42 32h1v1h-1zM18 33h2v1h-2zM42 34h1v1h-1zM21 35h1v1h-1zM39 35h1v1h-1zM12 36h1v1h-1zM29 40h1v1h-1zM19 43h1v1h-1zM32 45h1v1h-1z"/><path fill="#f0be78" d="M19 11h1v1h-1zM31 11h2v1h-2zM18 12h1v1h-1zM32 12h1v1h-1zM20 13h1v1h-1zM28 13h1v1h-1zM27 14h1v1h-1zM33 14h1v1h-1zM27 15h1v1h-1zM32 16h1v1h-1zM26 17h1v1h-1zM30 18h1v1h-1zM19 19h1v1h-1zM26 19h1v1h-1zM34 19h1v1h-1zM21 20h1v1h-1zM26 20h1v1h-1zM28 20h2v1h-2zM31 20h1v1h-1zM35 20h1v1h-1zM40 20h1v1h-1zM42 20h1v1h-1zM15 21h1v1h-1zM31 21h1v1h-1zM36 21h1v1h-1zM41 21h2v1h-2zM23 22h1v1h-1zM35 22h2v1h-2zM21 23h2v1h-2zM25 23h3v1h-3zM30 23h1v1h-1zM43 25h1v1h-1zM9 26h1v1h-1zM11 26h1v1h-1zM43 26h1v1h-1zM18 27h1v1h-1zM43 27h2v1h-2zM8 28h1v1h-1zM18 28h1v1h-1zM43 28h1v1h-1zM18 29h1v1h-1zM43 29h1v1h-1zM13 30h1v1h-1zM19 30h1v1h-1zM35 30h1v1h-1zM9 31h1v1h-1zM8 32h1v1h-1zM10 32h1v1h-1zM33 32h1v1h-1zM11 33h1v1h-1zM20 33h2v1h-2zM42 33h1v1h-1zM11 34h1v1h-1zM13 34h1v1h-1zM18 34h2v1h-2zM21 34h1v1h-1zM33 34h3v1h-3zM40 34h1v1h-1zM12 35h1v1h-1zM18 35h1v1h-1zM22 35h1v1h-1zM13 36h2v1h-2zM19 36h1v1h-1zM17 37h1v1h-1zM19 37h1v1h-1zM25 37h2v1h-2zM33 37h1v1h-1zM36 37h1v1h-1zM39 37h2v1h-2zM19 38h1v1h-1zM41 38h1v1h-1zM32 39h1v1h-1zM13 40h1v1h-1zM15 40h1v1h-1zM16 41h1v1h-1zM21 41h1v1h-1zM29 41h2v1h-2zM41 41h2v1h-2zM15 42h1v1h-1zM20 42h1v1h-1zM23 42h1v1h-1zM30 42h1v1h-1zM41 42h1v1h-1zM35 43h1v1h-1zM37 43h1v1h-1zM23 44h1v1h-1zM30 44h2v1h-2zM23 45h1v1h-1zM31 45h1v1h-1zM25 46h1v1h-1zM30 46h2v1h-2zM24 47h2v1h-2zM26 48h1v1h-1zM28 48h1v1h-1z"/><path fill="#fffcc4" d="M19 12h1v1h-1zM21 13h1v1h-1zM31 13h1v1h-1zM30 14h3v1h-3zM29 15h1v1h-1zM29 16h2v1h-2zM27 17h1v1h-1zM29 17h2v1h-2zM28 18h1v1h-1zM27 19h3v1h-3zM33 21h2v1h-2zM40 21h1v1h-1zM32 22h3v1h-3zM41 22h1v1h-1zM43 22h1v1h-1zM23 23h1v1h-1zM31 23h1v1h-1zM33 23h2v1h-2zM40 23h3v1h-3zM20 24h3v1h-3zM24 24h1v1h-1zM30 24h1v1h-1zM34 24h1v1h-1zM40 24h1v1h-1zM42 24h1v1h-1zM19 25h1v1h-1zM21 25h1v1h-1zM25 25h4v1h-4zM32 25h1v1h-1zM40 25h2v1h-2zM10 26h1v1h-1zM20 26h3v1h-3zM24 26h1v1h-1zM27 26h1v1h-1zM41 26h2v1h-2zM11 27h1v1h-1zM20 27h1v1h-1zM22 27h6v1h-6zM40 27h3v1h-3zM19 28h1v1h-1zM22 28h3v1h-3zM26 28h1v1h-1zM28 28h1v1h-1zM42 28h1v1h-1zM10 29h1v1h-1zM12 29h1v1h-1zM19 29h1v1h-1zM21 29h2v1h-2zM26 29h1v1h-1zM39 29h2v1h-2zM10 30h1v1h-1zM12 30h1v1h-1zM20 30h1v1h-1zM22 30h1v1h-1zM25 30h1v1h-1zM27 30h2v1h-2zM37 30h5v1h-5zM11 31h2v1h-2zM22 31h3v1h-3zM26 31h4v1h-4zM34 31h1v1h-1zM36 31h2v1h-2zM39 31h2v1h-2zM25 32h5v1h-5zM38 32h3v1h-3zM12 33h1v1h-1zM22 33h1v1h-1zM24 33h5v1h-5zM35 33h1v1h-1zM37 33h1v1h-1zM39 33h2v1h-2zM12 34h1v1h-1zM14 34h1v1h-1zM16 34h2v1h-2zM22 34h1v1h-1zM24 34h1v1h-1zM26 34h2v1h-2zM14 35h4v1h-4zM25 35h3v1h-3zM15 37h1v1h-1zM35 38h2v1h-2zM33 39h4v1h-4zM38 39h1v1h-1zM40 39h2v1h-2zM18 40h2v1h-2zM36 40h1v1h-1zM38 40h4v1h-4zM17 41h1v1h-1zM19 41h1v1h-1zM34 41h1v1h-1zM36 41h1v1h-1zM39 41h2v1h-2zM27 42h3v1h-3zM24 43h2v1h-2zM28 43h2v1h-2zM24 44h1v1h-1zM27 44h3v1h-3zM28 45h2v1h-2zM26 46h1v1h-1zM26 47h3v1h-3z"/><path fill="#ffdeaa" d="M29 12h1v1h-1zM31 12h1v1h-1zM18 13h2v1h-2zM29 13h1v1h-1zM19 14h2v1h-2zM28 14h1v1h-1zM28 15h1v1h-1zM32 15h1v1h-1zM42 19h1v1h-1zM23 20h1v1h-1zM34 20h1v1h-1zM20 21h1v1h-1zM23 21h2v1h-2zM35 21h1v1h-1zM30 22h1v1h-1zM42 22h1v1h-1zM35 23h1v1h-1zM19 24h1v1h-1zM26 24h1v1h-1zM28 24h1v1h-1zM43 24h1v1h-1zM29 25h1v1h-1zM30 26h1v1h-1zM12 27h1v1h-1zM45 27h1v1h-1zM9 30h1v1h-1zM36 30h1v1h-1zM20 31h1v1h-1zM15 33h1v1h-1zM41 33h1v1h-1zM29 34h1v1h-1zM37 34h1v1h-1zM11 35h1v1h-1zM23 35h1v1h-1zM28 35h1v1h-1zM20 36h1v1h-1zM23 36h1v1h-1zM25 36h1v1h-1zM27 36h1v1h-1zM24 37h1v1h-1zM35 37h1v1h-1zM37 37h2v1h-2zM18 38h1v1h-1zM33 38h1v1h-1zM14 40h1v1h-1zM18 41h1v1h-1zM20 41h1v1h-1zM27 41h1v1h-1zM17 42h1v1h-1zM38 43h1v1h-1zM30 45h1v1h-1zM29 46h1v1h-1zM29 47h1v1h-1z"/><path fill="#ffff78" d="M33 12h1v1h-1zM33 13h1v1h-1zM31 16h1v1h-1zM33 19h1v1h-1zM33 20h1v1h-1zM29 23h1v1h-1zM43 23h1v1h-1zM18 24h1v1h-1zM27 24h1v1h-1zM30 25h1v1h-1zM33 25h1v1h-1zM8 26h1v1h-1zM12 26h1v1h-1zM32 26h1v1h-1zM13 27h1v1h-1zM13 29h1v1h-1zM42 29h1v1h-1zM29 30h1v1h-1zM42 30h1v1h-1zM42 31h1v1h-1zM9 32h1v1h-1zM41 32h1v1h-1zM14 33h1v1h-1zM13 35h1v1h-1zM28 36h1v1h-1zM16 37h1v1h-1zM34 37h1v1h-1zM32 40h1v1h-1zM28 41h1v1h-1zM32 41h1v1h-1zM18 42h2v1h-2zM31 42h1v1h-1zM34 42h1v1h-1zM36 42h5v1h-5zM23 43h1v1h-1zM30 43h1v1h-1zM39 43h1v1h-1zM24 45h1v1h-1zM23 46h1v1h-1zM30 47h1v1h-1zM25 48h1v1h-1z"/><path fill="#fef0d6" d="M30 13h1v1h-1zM32 13h1v1h-1zM29 14h1v1h-1zM30 15h1v1h-1zM28 17h1v1h-1zM27 18h1v1h-1zM29 18h1v1h-1zM32 21h1v1h-1zM31 22h1v1h-1zM40 22h1v1h-1zM32 23h1v1h-1zM23 24h1v1h-1zM31 24h3v1h-3zM41 24h1v1h-1zM22 25h2v1h-2zM42 25h1v1h-1zM19 26h1v1h-1zM23 26h1v1h-1zM25 26h1v1h-1zM40 26h1v1h-1zM10 27h1v1h-1zM19 27h1v1h-1zM21 27h1v1h-1zM10 28h3v1h-3zM20 28h2v1h-2zM25 28h1v1h-1zM40 28h2v1h-2zM11 29h1v1h-1zM20 29h1v1h-1zM23 29h3v1h-3zM27 29h2v1h-2zM41 29h1v1h-1zM21 30h1v1h-1zM23 30h2v1h-2zM26 30h1v1h-1zM10 31h1v1h-1zM21 31h1v1h-1zM25 31h1v1h-1zM35 31h1v1h-1zM38 31h1v1h-1zM11 32h2v1h-2zM21 32h4v1h-4zM34 32h2v1h-2zM37 32h1v1h-1zM23 33h1v1h-1zM29 33h1v1h-1zM36 33h1v1h-1zM38 33h1v1h-1zM23 34h1v1h-1zM25 34h1v1h-1zM28 34h1v1h-1zM24 35h1v1h-1zM15 36h4v1h-4zM26 36h1v1h-1zM34 38h1v1h-1zM38 38h2v1h-2zM37 39h1v1h-1zM39 39h1v1h-1zM16 40h2v1h-2zM21 40h1v1h-1zM33 40h2v1h-2zM35 41h1v1h-1zM37 41h1v1h-1zM26 42h1v1h-1zM26 43h2v1h-2zM25 44h1v1h-1zM25 45h3v1h-3zM27 46h2v1h-2z"/><path fill="#f0d7e6" d="M31 15h1v1h-1zM28 16h1v1h-1zM25 24h1v1h-1zM20 25h1v1h-1zM24 25h1v1h-1zM31 25h1v1h-1zM26 26h1v1h-1zM27 28h1v1h-1zM11 30h1v1h-1zM36 32h1v1h-1zM34 33h1v1h-1zM15 34h1v1h-1zM37 38h1v1h-1zM20 40h1v1h-1zM35 40h1v1h-1zM37 40h1v1h-1zM38 41h1v1h-1zM26 44h1v1h-1z"/><path fill="#c88c64" d="M31 17h1v1h-1zM32 19h1v1h-1zM27 20h1v1h-1zM32 20h1v1h-1zM16 21h1v1h-1zM11 25h1v1h-1zM13 28h1v1h-1zM29 29h1v1h-1zM13 31h1v1h-1zM19 32h1v1h-1zM24 36h1v1h-1zM40 38h1v1h-1zM22 40h1v1h-1zM42 40h1v1h-1zM22 41h1v1h-1zM33 41h1v1h-1zM31 43h1v1h-1zM36 43h1v1h-1zM24 46h1v1h-1z"/></g><filter id="bl" x="-5%" y="-5%" width="110%" height="110%"><feGaussianBlur stdDeviation="0.42"/></filter></defs></svg><svg style="left:878.3px;top:206.7px;background:#000" width="258" height="231.7" viewBox="0 0 60 54" preserveAspectRatio="none"><use href="#boom"/></svg><div style="left:500px;top:212.7px;width:258.4px;height:232.3px;background:#000;overflow:hidden"><svg style="left:0;top:0" width="258.4" height="232.3" viewBox="0 0 60 54" preserveAspectRatio="none"><g filter="url(#bl)"><use href="#boom"/></g></svg></div></body></html>
